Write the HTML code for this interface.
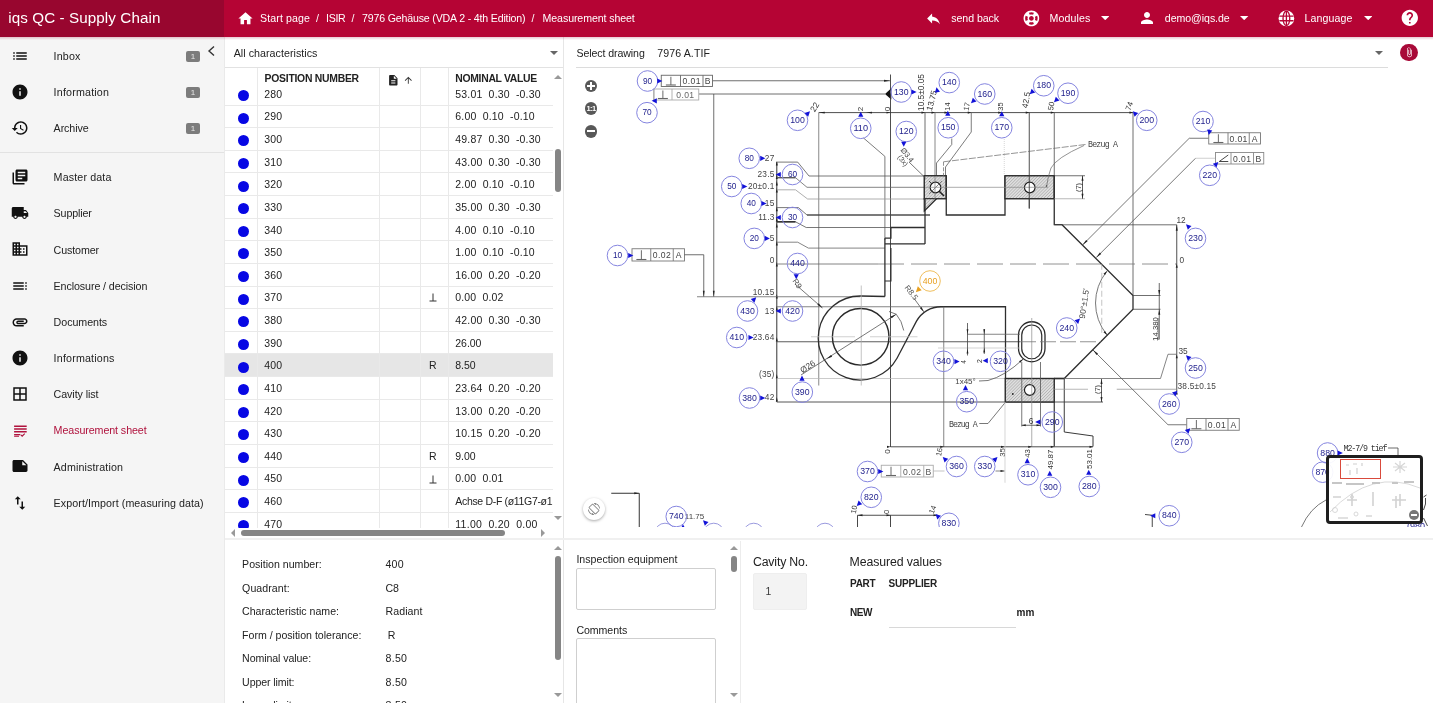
<!DOCTYPE html>
<html><head><meta charset="utf-8"><title>iqs QC</title>
<style>
*{box-sizing:border-box;margin:0;padding:0}
html{background:#fff}
html,body{width:1433px;height:703px;overflow:hidden;background:#fff;font-family:"Liberation Sans",sans-serif;color:#222;}
body{filter:blur(0.4px)}
.abs{position:absolute}
#hdrL{left:0;top:0;width:224px;height:37px;background:#98062f;}
#hdrR{left:224px;top:0;width:1209px;height:37px;background:#b50434;}
#hdrS{left:0;top:37px;width:1433px;height:3px;background:linear-gradient(rgba(152,6,47,.22),rgba(152,6,47,0));z-index:5}
.ht{position:absolute;color:#fff;font-size:10.4px;top:12px;white-space:nowrap;line-height:12px;letter-spacing:-0.1px}
#title{position:absolute;left:8px;top:8px;color:#fff;font-size:15px;line-height:20px;white-space:nowrap;letter-spacing:0.45px}
#side{left:0;top:37px;width:224px;height:666px;background:#f5f5f5;}
#sideB{left:224px;top:37px;width:1px;height:666px;background:#eaeaea}
.si{position:absolute;left:53px;font-size:10.4px;line-height:12px;white-space:nowrap;color:#222;letter-spacing:-0.05px}
.badge{position:absolute;left:186px;width:14px;height:11px;background:#7c7c7c;border-radius:2px;color:#e8e8e8;font-size:8px;line-height:11px;text-align:center}
#mid{left:225px;top:37px;width:339px;height:666px;background:#fff}
#midB{left:563px;top:37px;width:1px;height:666px;background:#e6e6e6}
.tr{position:absolute;left:225px;width:327px;height:22.63px;border-bottom:1px solid #e6e6e6;font-size:10.6px;line-height:12px;color:#222}
.tr i{position:absolute;left:13px;top:6.5px;width:11px;height:11px;border-radius:50%;background:#0606e6}
.tr b{position:absolute;left:39px;top:5px;font-weight:normal}
.tr u{position:absolute;left:204px;top:5px;text-decoration:none}
.tr s{position:absolute;left:230px;top:5px;text-decoration:none;white-space:pre}
.vl{position:absolute;top:68px;width:1px;height:460px;background:#e9e9e9}
.dl{position:absolute;left:241px;font-size:10.4px;line-height:12px;white-space:nowrap;letter-spacing:-0.05px}
.dv{position:absolute;left:385px;font-size:10.4px;line-height:12px;white-space:nowrap}
.lbl{position:absolute;font-size:10.4px;line-height:12px;white-space:nowrap;letter-spacing:-0.05px}
.th{position:absolute;font-size:10.3px;font-weight:bold;line-height:12px;white-space:nowrap;color:#222;letter-spacing:0.1px}
</style></head><body>
<div class="abs" id="hdrL"></div><div class="abs" id="hdrR"></div><div class="abs" id="hdrS"></div>
<div class="abs" style="left:8.3px;top:8.40px;font-size:15.2px;line-height:20px;white-space:pre;color:#fff;letter-spacing:0.092px;">iqs QC - Supply Chain</div>
<svg class="abs" style="left:237px;top:10px" width="17" height="17" viewBox="0 0 24 24"><path fill="#fff" d="M10 20v-6h4v6h5v-8h3L12 3 2 12h3v8z"/></svg>
<div class="abs" style="left:260px;top:12.10px;font-size:10.6px;line-height:12px;white-space:pre;color:#fff;letter-spacing:0.119px;">Start page</div>
<div class="abs" style="left:316px;top:12.10px;font-size:10.6px;line-height:12px;white-space:pre;color:#fff;letter-spacing:0.000px;">/</div>
<div class="abs" style="left:326px;top:12.10px;font-size:10.6px;line-height:12px;white-space:pre;color:#fff;letter-spacing:-0.279px;">ISIR</div>
<div class="abs" style="left:351.5px;top:12.10px;font-size:10.6px;line-height:12px;white-space:pre;color:#fff;letter-spacing:0.000px;">/</div>
<div class="abs" style="left:362px;top:12.10px;font-size:10.6px;line-height:12px;white-space:pre;color:#fff;letter-spacing:-0.165px;">7976 Gehäuse (VDA 2 - 4th Edition)</div>
<div class="abs" style="left:531.5px;top:12.10px;font-size:10.6px;line-height:12px;white-space:pre;color:#fff;letter-spacing:0.000px;">/</div>
<div class="abs" style="left:542.6px;top:12.10px;font-size:10.6px;line-height:12px;white-space:pre;color:#fff;letter-spacing:-0.093px;">Measurement sheet</div>
<svg class="abs" style="left:925px;top:9.5px" width="17" height="17" viewBox="0 0 24 24"><path fill="#fff" d="M10 9V5l-7 7 7 7v-4.1c5 0 8.500 1.600 11 5.100-1-5-4-10-11-11z"/></svg>
<div class="abs" style="left:951.3px;top:11.90px;font-size:10.6px;line-height:12px;white-space:pre;color:#fff;letter-spacing:-0.058px;">send back</div>
<svg class="abs" style="left:1022.2px;top:8.6px" width="18.8" height="18.8" viewBox="0 0 24 24"><path fill="#fff" d="M12 2C6.480 2 2 6.480 2 12s4.480 10 10 10 10-4.480 10-10S17.520 2 12 2zm7.460 7.120l-2.780 1.150c-.51-1.360-1.580-2.440-2.950-2.940l1.150-2.780c2.100.8 3.770 2.470 4.580 4.570zM12 15c-1.660 0-3-1.340-3-3s1.340-3 3-3 3 1.340 3 3-1.340 3-3 3zM9.130 4.540l1.170 2.780c-1.380.5-2.470 1.590-2.980 2.970L4.540 9.130c.81-2.110 2.480-3.780 4.590-4.590zM4.540 14.870l2.780-1.150c.51 1.380 1.590 2.460 2.970 2.960l-1.170 2.780c-2.100-.81-3.770-2.480-4.580-4.590zm10.340 4.590l-1.150-2.780c1.370-.51 2.450-1.590 2.950-2.970l2.780 1.170c-.81 2.100-2.480 3.770-4.580 4.580z" transform="rotate(45 12 12)"/></svg>
<div class="abs" style="left:1049.5px;top:11.90px;font-size:10.6px;line-height:12px;white-space:pre;color:#fff;letter-spacing:0.105px;">Modules</div>
<svg class="abs" style="left:1100.8px;top:16px" width="8.4" height="4.2" viewBox="0 0 10 5"><path fill="#fff" d="M0 0h10L5 5z"/></svg>
<svg class="abs" style="left:1138px;top:9px" width="18" height="18" viewBox="0 0 24 24"><path fill="#fff" d="M12 12c2.210 0 4-1.790 4-4s-1.790-4-4-4-4 1.790-4 4 1.790 4 4 4zm0 2c-2.670 0-8 1.340-8 4v2h16v-2c0-2.660-5.330-4-8-4z"/></svg>
<div class="abs" style="left:1164.8px;top:11.90px;font-size:10.6px;line-height:12px;white-space:pre;color:#fff;letter-spacing:-0.060px;">demo@iqs.de</div>
<svg class="abs" style="left:1240.3px;top:16px" width="8.4" height="4.2" viewBox="0 0 10 5"><path fill="#fff" d="M0 0h10L5 5z"/></svg>
<svg class="abs" style="left:1277px;top:8.5px" width="18.8" height="18.8" viewBox="0 0 24 24"><circle cx="12" cy="12" r="10" fill="#fff"/><g fill="none" stroke="#b50434" stroke-width="1.7"><ellipse cx="12" cy="12" rx="4.3" ry="9.2"/><path d="M3 9h18M3 15h18M12 2.500v19"/></g></svg>
<div class="abs" style="left:1304.6px;top:11.90px;font-size:10.6px;line-height:12px;white-space:pre;color:#fff;letter-spacing:0.080px;">Language</div>
<svg class="abs" style="left:1363.5px;top:16px" width="8.4" height="4.2" viewBox="0 0 10 5"><path fill="#fff" d="M0 0h10L5 5z"/></svg>
<svg class="abs" style="left:1399.7px;top:8.1px" width="19.6" height="19.6" viewBox="0 0 24 24"><path fill="#fff" d="M12 2C6.480 2 2 6.480 2 12s4.480 10 10 10 10-4.480 10-10S17.520 2 12 2zm1 17h-2v-2h2v2zm2.070-7.750l-.9.920C13.450 12.900 13 13.500 13 15h-2v-.5c0-1.100.45-2.100 1.170-2.830l1.240-1.260c.37-.36.590-.86.590-1.410 0-1.100-.9-2-2-2s-2 .9-2 2H8c0-2.210 1.790-4 4-4s4 1.790 4 4c0 .88-.36 1.680-.93 2.250z"/></svg>
<div class="abs" id="side"></div><div class="abs" id="sideB"></div>
<div class="abs" style="left:0;top:152px;width:224px;height:1px;background:#e2e2e2"></div>
<svg class="abs" style="left:11.3px;top:46.8px" width="18" height="18" viewBox="0 0 24 24"><path fill="#111" d="M3 13h2v-2H3v2zm0 4h2v-2H3v2zm0-8h2V7H3v2zm4 4h14v-2H7v2zm0 4h14v-2H7v2zM7 7v2h14V7H7z"/></svg>
<div class="abs" style="left:53.6px;top:50.00px;font-size:10.7px;line-height:12px;white-space:pre;color:#222;letter-spacing:0.165px;">Inbox</div>
<div class="badge" style="top:50.8px">1</div>
<svg class="abs" style="left:11.3px;top:83.0px" width="18" height="18" viewBox="0 0 24 24"><path fill="#111" d="M12 2C6.480 2 2 6.480 2 12s4.480 10 10 10 10-4.480 10-10S17.520 2 12 2zm1 15h-2v-6h2v6zm0-8h-2V7h2v2z"/></svg>
<div class="abs" style="left:53.6px;top:86.20px;font-size:10.7px;line-height:12px;white-space:pre;color:#222;letter-spacing:0.188px;">Information</div>
<div class="badge" style="top:87.0px">1</div>
<svg class="abs" style="left:11.3px;top:119.19999999999999px" width="18" height="18" viewBox="0 0 24 24"><path fill="#111" d="M13 3c-4.970 0-9 4.030-9 9H1l3.890 3.890.07.14L9 12H6c0-3.870 3.130-7 7-7s7 3.130 7 7-3.130 7-7 7c-1.930 0-3.680-.79-4.940-2.060l-1.420 1.420C8.270 19.990 10.510 21 13 21c4.970 0 9-4.030 9-9s-4.030-9-9-9zm-1 5v5l4.280 2.540.72-1.210-3.500-2.080V8H12z"/></svg>
<div class="abs" style="left:53.6px;top:122.40px;font-size:10.7px;line-height:12px;white-space:pre;color:#222;letter-spacing:-0.097px;">Archive</div>
<div class="badge" style="top:123.2px">1</div>
<svg class="abs" style="left:11.3px;top:168.1px" width="18" height="18" viewBox="0 0 24 24"><path fill="#111" d="M4 6H2v14c0 1.100.9 2 2 2h14v-2H4V6zm16-4H8c-1.100 0-2 .9-2 2v12c0 1.100.9 2 2 2h12c1.100 0 2-.9 2-2V4c0-1.100-.9-2-2-2zm-1 9H9V9h10v2zm-4 4H9v-2h6v2zm4-8H9V5h10v2z"/></svg>
<div class="abs" style="left:53.6px;top:171.30px;font-size:10.7px;line-height:12px;white-space:pre;color:#222;letter-spacing:0.136px;">Master data</div>
<svg class="abs" style="left:11.3px;top:204.27px" width="18" height="18" viewBox="0 0 24 24"><path fill="#111" d="M20 8h-3V4H3c-1.100 0-2 .9-2 2v11h2c0 1.660 1.340 3 3 3s3-1.340 3-3h6c0 1.660 1.340 3 3 3s3-1.340 3-3h2v-5l-3-4zM6 18.500c-.83 0-1.500-.67-1.500-1.500s.67-1.500 1.500-1.500 1.500.67 1.500 1.500-.67 1.500-1.500 1.500zm13.500-9l1.960 2.500H17V9.500h2.500zm-1.500 9c-.83 0-1.500-.67-1.500-1.500s.67-1.500 1.500-1.500 1.500.67 1.500 1.500-.67 1.500-1.500 1.500z"/></svg>
<div class="abs" style="left:53.6px;top:207.47px;font-size:10.7px;line-height:12px;white-space:pre;color:#222;letter-spacing:-0.132px;">Supplier</div>
<svg class="abs" style="left:11.3px;top:240.44px" width="18" height="18" viewBox="0 0 24 24"><path fill="#111" d="M12 7V3H2v18h20V7H12zM6 19H4v-2h2v2zm0-4H4v-2h2v2zm0-4H4V9h2v2zm0-4H4V5h2v2zm4 12H8v-2h2v2zm0-4H8v-2h2v2zm0-4H8V9h2v2zm0-4H8V5h2v2zm10 12h-8v-2h2v-2h-2v-2h2v-2h-2V9h8v10zm-2-8h-2v2h2v-2zm0 4h-2v2h2v-2z"/></svg>
<div class="abs" style="left:53.6px;top:243.64px;font-size:10.7px;line-height:12px;white-space:pre;color:#222;letter-spacing:-0.123px;">Customer</div>
<svg class="abs" style="left:11.3px;top:276.61px" width="18" height="18" viewBox="0 0 24 24"><path fill="#111" d="M3 9h14V7H3v2zm0 4h14v-2H3v2zm0 4h14v-2H3v2zm16 0h2v-2h-2v2zm0-10v2h2V7h-2zm0 6h2v-2h-2v2z"/></svg>
<div class="abs" style="left:53.6px;top:279.81px;font-size:10.7px;line-height:12px;white-space:pre;color:#222;letter-spacing:-0.098px;">Enclosure / decision</div>
<svg class="abs" style="left:11.3px;top:312.78px" width="18" height="18" viewBox="0 0 24 24"><path fill="#111" d="M2 12.500C2 9.460 4.460 7 7.500 7H18c2.210 0 4 1.790 4 4s-1.790 4-4 4H9.500C8.120 15 7 13.880 7 12.500S8.120 10 9.500 10H17v2H9.410c-.55 0-.55 1 0 1H18c1.100 0 2-.9 2-2s-.9-2-2-2H7.500C5.570 9 4 10.570 4 12.500S5.570 16 7.500 16H17v2H7.500C4.460 18 2 15.540 2 12.500z"/></svg>
<div class="abs" style="left:53.6px;top:315.98px;font-size:10.7px;line-height:12px;white-space:pre;color:#222;letter-spacing:-0.058px;">Documents</div>
<svg class="abs" style="left:11.3px;top:348.95px" width="18" height="18" viewBox="0 0 24 24"><path fill="#111" d="M12 2C6.480 2 2 6.480 2 12s4.480 10 10 10 10-4.480 10-10S17.520 2 12 2zm1 15h-2v-6h2v6zm0-8h-2V7h2v2z"/></svg>
<div class="abs" style="left:53.6px;top:352.15px;font-size:10.7px;line-height:12px;white-space:pre;color:#222;letter-spacing:0.185px;">Informations</div>
<svg class="abs" style="left:11.3px;top:385.12px" width="18" height="18" viewBox="0 0 24 24"><path fill="#111" d="M3 3v18h18V3H3zm8 16H5v-6h6v6zm0-8H5V5h6v6zm8 8h-6v-6h6v6zm0-8h-6V5h6v6z"/></svg>
<div class="abs" style="left:53.6px;top:388.32px;font-size:10.7px;line-height:12px;white-space:pre;color:#222;letter-spacing:-0.080px;">Cavity list</div>
<svg class="abs" style="left:11.9px;top:421.89000000000004px" width="16.8" height="16.8" viewBox="0 0 24 24"><path fill="#b0123d" d="M3 5h18v2H3zM3 9h18v2H3zM3 13h18v2H3zM3 17h9v2H3zM3 21h7v-1.500H3zM14.500 21.300l-2.300-2.300 1.100-1.100 1.200 1.200 3.200-3.200 1.100 1.100z"/></svg>
<div class="abs" style="left:53.6px;top:424.49px;font-size:10.7px;line-height:12px;white-space:pre;color:#b0123d;letter-spacing:-0.086px;">Measurement sheet</div>
<svg class="abs" style="left:11.3px;top:457.46px" width="18" height="18" viewBox="0 0 24 24"><path fill="#111" d="M22 10l-6-6H4c-1.100 0-2 .9-2 2v12.010c0 1.100.9 1.990 2 1.990l16-.01c1.100 0 2-.89 2-1.990v-8zm-7-4.500l5.500 5.500H15V5.500z"/></svg>
<div class="abs" style="left:53.6px;top:460.66px;font-size:10.7px;line-height:12px;white-space:pre;color:#222;letter-spacing:0.122px;">Administration</div>
<svg class="abs" style="left:11.3px;top:493.63px" width="18" height="18" viewBox="0 0 24 24"><path fill="#111" d="M16 17.010V10h-2v7.010h-3L15 21l4-3.990h-3zM9 3L5 6.990h3V14h2V6.990h3L9 3z"/></svg>
<div class="abs" style="left:53.6px;top:496.83px;font-size:10.7px;line-height:12px;white-space:pre;color:#222;letter-spacing:0.074px;">Export/Import (measuring data)</div>
<svg class="abs" style="left:206px;top:45px" width="10" height="12" viewBox="0 0 10 12"><path d="M8 1.500L3 6l5 4.500" fill="none" stroke="#333" stroke-width="1.400"/></svg>
<div class="abs" id="mid"></div><div class="abs" id="midB"></div>
<div class="abs" style="left:233.7px;top:47.00px;font-size:10.7px;line-height:12px;white-space:pre;color:#222;letter-spacing:0.034px;">All characteristics</div>
<svg class="abs" style="left:550px;top:51px" width="8" height="4" viewBox="0 0 10 5"><path fill="#666" d="M0 0h10L5 5z"/></svg>
<div class="abs" style="left:225px;top:67px;width:338px;height:1px;background:#e2e2e2"></div>
<div class="abs" style="left:225px;top:68px;width:327.5px;height:460px;overflow:hidden">
<div style="position:absolute;left:-225px;top:-68px;width:1433px;height:703px">
<div class="abs" style="left:225px;top:104.53px;width:328px;height:1px;background:#e9e9e9"></div>
<div class="abs" style="left:238.2px;top:90.00px;width:11px;height:11px;border-radius:50%;background:#0707e4"></div>
<div class="abs" style="left:264.3px;top:87.75px;font-size:10.5px;line-height:12px;white-space:pre;color:#222;letter-spacing:0.127px;">280</div>
<div class="abs" style="left:455.3px;top:87.75px;font-size:10.5px;line-height:12px;white-space:pre;color:#222;letter-spacing:0.174px;">53.01  0.30  -0.30</div>
<div class="abs" style="left:225px;top:127.16px;width:328px;height:1px;background:#e9e9e9"></div>
<div class="abs" style="left:238.2px;top:112.63px;width:11px;height:11px;border-radius:50%;background:#0707e4"></div>
<div class="abs" style="left:264.3px;top:110.38px;font-size:10.5px;line-height:12px;white-space:pre;color:#222;letter-spacing:0.127px;">290</div>
<div class="abs" style="left:455.3px;top:110.38px;font-size:10.5px;line-height:12px;white-space:pre;color:#222;letter-spacing:0.179px;">6.00  0.10  -0.10</div>
<div class="abs" style="left:225px;top:149.79px;width:328px;height:1px;background:#e9e9e9"></div>
<div class="abs" style="left:238.2px;top:135.26px;width:11px;height:11px;border-radius:50%;background:#0707e4"></div>
<div class="abs" style="left:264.3px;top:133.01px;font-size:10.5px;line-height:12px;white-space:pre;color:#222;letter-spacing:0.127px;">300</div>
<div class="abs" style="left:455.3px;top:133.01px;font-size:10.5px;line-height:12px;white-space:pre;color:#222;letter-spacing:0.174px;">49.87  0.30  -0.30</div>
<div class="abs" style="left:225px;top:172.42px;width:328px;height:1px;background:#e9e9e9"></div>
<div class="abs" style="left:238.2px;top:157.89px;width:11px;height:11px;border-radius:50%;background:#0707e4"></div>
<div class="abs" style="left:264.3px;top:155.64px;font-size:10.5px;line-height:12px;white-space:pre;color:#222;letter-spacing:0.127px;">310</div>
<div class="abs" style="left:455.3px;top:155.64px;font-size:10.5px;line-height:12px;white-space:pre;color:#222;letter-spacing:0.174px;">43.00  0.30  -0.30</div>
<div class="abs" style="left:225px;top:195.05px;width:328px;height:1px;background:#e9e9e9"></div>
<div class="abs" style="left:238.2px;top:180.52px;width:11px;height:11px;border-radius:50%;background:#0707e4"></div>
<div class="abs" style="left:264.3px;top:178.27px;font-size:10.5px;line-height:12px;white-space:pre;color:#222;letter-spacing:0.127px;">320</div>
<div class="abs" style="left:455.3px;top:178.27px;font-size:10.5px;line-height:12px;white-space:pre;color:#222;letter-spacing:0.179px;">2.00  0.10  -0.10</div>
<div class="abs" style="left:225px;top:217.68px;width:328px;height:1px;background:#e9e9e9"></div>
<div class="abs" style="left:238.2px;top:203.15px;width:11px;height:11px;border-radius:50%;background:#0707e4"></div>
<div class="abs" style="left:264.3px;top:200.90px;font-size:10.5px;line-height:12px;white-space:pre;color:#222;letter-spacing:0.127px;">330</div>
<div class="abs" style="left:455.3px;top:200.90px;font-size:10.5px;line-height:12px;white-space:pre;color:#222;letter-spacing:0.174px;">35.00  0.30  -0.30</div>
<div class="abs" style="left:225px;top:240.31px;width:328px;height:1px;background:#e9e9e9"></div>
<div class="abs" style="left:238.2px;top:225.78px;width:11px;height:11px;border-radius:50%;background:#0707e4"></div>
<div class="abs" style="left:264.3px;top:223.53px;font-size:10.5px;line-height:12px;white-space:pre;color:#222;letter-spacing:0.127px;">340</div>
<div class="abs" style="left:455.3px;top:223.53px;font-size:10.5px;line-height:12px;white-space:pre;color:#222;letter-spacing:0.179px;">4.00  0.10  -0.10</div>
<div class="abs" style="left:225px;top:262.94px;width:328px;height:1px;background:#e9e9e9"></div>
<div class="abs" style="left:238.2px;top:248.41px;width:11px;height:11px;border-radius:50%;background:#0707e4"></div>
<div class="abs" style="left:264.3px;top:246.16px;font-size:10.5px;line-height:12px;white-space:pre;color:#222;letter-spacing:0.127px;">350</div>
<div class="abs" style="left:455.3px;top:246.16px;font-size:10.5px;line-height:12px;white-space:pre;color:#222;letter-spacing:0.179px;">1.00  0.10  -0.10</div>
<div class="abs" style="left:225px;top:285.57px;width:328px;height:1px;background:#e9e9e9"></div>
<div class="abs" style="left:238.2px;top:271.04px;width:11px;height:11px;border-radius:50%;background:#0707e4"></div>
<div class="abs" style="left:264.3px;top:268.79px;font-size:10.5px;line-height:12px;white-space:pre;color:#222;letter-spacing:0.127px;">360</div>
<div class="abs" style="left:455.3px;top:268.79px;font-size:10.5px;line-height:12px;white-space:pre;color:#222;letter-spacing:0.174px;">16.00  0.20  -0.20</div>
<div class="abs" style="left:225px;top:308.20px;width:328px;height:1px;background:#e9e9e9"></div>
<div class="abs" style="left:238.2px;top:293.67px;width:11px;height:11px;border-radius:50%;background:#0707e4"></div>
<div class="abs" style="left:264.3px;top:291.42px;font-size:10.5px;line-height:12px;white-space:pre;color:#222;letter-spacing:0.127px;">370</div>
<svg class="abs" style="left:429px;top:293.47px" width="8" height="9" viewBox="0 0 8 9"><path d="M4 0.500V8M0.500 8H7.500" stroke="#333" stroke-width="1" fill="none"/></svg>
<div class="abs" style="left:455.3px;top:291.42px;font-size:10.5px;line-height:12px;white-space:pre;color:#222;letter-spacing:0.157px;">0.00  0.02</div>
<div class="abs" style="left:225px;top:330.83px;width:328px;height:1px;background:#e9e9e9"></div>
<div class="abs" style="left:238.2px;top:316.30px;width:11px;height:11px;border-radius:50%;background:#0707e4"></div>
<div class="abs" style="left:264.3px;top:314.05px;font-size:10.5px;line-height:12px;white-space:pre;color:#222;letter-spacing:0.127px;">380</div>
<div class="abs" style="left:455.3px;top:314.05px;font-size:10.5px;line-height:12px;white-space:pre;color:#222;letter-spacing:0.174px;">42.00  0.30  -0.30</div>
<div class="abs" style="left:225px;top:353.46px;width:328px;height:1px;background:#e9e9e9"></div>
<div class="abs" style="left:238.2px;top:338.93px;width:11px;height:11px;border-radius:50%;background:#0707e4"></div>
<div class="abs" style="left:264.3px;top:336.68px;font-size:10.5px;line-height:12px;white-space:pre;color:#222;letter-spacing:0.127px;">390</div>
<div class="abs" style="left:455.3px;top:336.68px;font-size:10.5px;line-height:12px;white-space:pre;color:#222;letter-spacing:-0.041px;">26.00</div>
<div class="abs" style="left:225px;top:354.36px;width:328px;height:22.63px;background:#e6e6e6"></div>
<div class="abs" style="left:225px;top:376.09px;width:328px;height:1px;background:#e9e9e9"></div>
<div class="abs" style="left:238.2px;top:361.56px;width:11px;height:11px;border-radius:50%;background:#0707e4"></div>
<div class="abs" style="left:264.3px;top:359.31px;font-size:10.5px;line-height:12px;white-space:pre;color:#222;letter-spacing:0.127px;">400</div>
<div class="abs" style="left:429px;top:359.31px;font-size:10.5px;line-height:12px;white-space:pre;color:#222;letter-spacing:0.000px;">R</div>
<div class="abs" style="left:455.3px;top:359.31px;font-size:10.5px;line-height:12px;white-space:pre;color:#222;letter-spacing:-0.074px;">8.50</div>
<div class="abs" style="left:225px;top:398.72px;width:328px;height:1px;background:#e9e9e9"></div>
<div class="abs" style="left:238.2px;top:384.19px;width:11px;height:11px;border-radius:50%;background:#0707e4"></div>
<div class="abs" style="left:264.3px;top:381.94px;font-size:10.5px;line-height:12px;white-space:pre;color:#222;letter-spacing:0.127px;">410</div>
<div class="abs" style="left:455.3px;top:381.94px;font-size:10.5px;line-height:12px;white-space:pre;color:#222;letter-spacing:0.174px;">23.64  0.20  -0.20</div>
<div class="abs" style="left:225px;top:421.35px;width:328px;height:1px;background:#e9e9e9"></div>
<div class="abs" style="left:238.2px;top:406.82px;width:11px;height:11px;border-radius:50%;background:#0707e4"></div>
<div class="abs" style="left:264.3px;top:404.57px;font-size:10.5px;line-height:12px;white-space:pre;color:#222;letter-spacing:0.127px;">420</div>
<div class="abs" style="left:455.3px;top:404.57px;font-size:10.5px;line-height:12px;white-space:pre;color:#222;letter-spacing:0.174px;">13.00  0.20  -0.20</div>
<div class="abs" style="left:225px;top:443.98px;width:328px;height:1px;background:#e9e9e9"></div>
<div class="abs" style="left:238.2px;top:429.45px;width:11px;height:11px;border-radius:50%;background:#0707e4"></div>
<div class="abs" style="left:264.3px;top:427.20px;font-size:10.5px;line-height:12px;white-space:pre;color:#222;letter-spacing:0.127px;">430</div>
<div class="abs" style="left:455.3px;top:427.20px;font-size:10.5px;line-height:12px;white-space:pre;color:#222;letter-spacing:0.174px;">10.15  0.20  -0.20</div>
<div class="abs" style="left:225px;top:466.61px;width:328px;height:1px;background:#e9e9e9"></div>
<div class="abs" style="left:238.2px;top:452.08px;width:11px;height:11px;border-radius:50%;background:#0707e4"></div>
<div class="abs" style="left:264.3px;top:449.83px;font-size:10.5px;line-height:12px;white-space:pre;color:#222;letter-spacing:0.127px;">440</div>
<div class="abs" style="left:429px;top:449.83px;font-size:10.5px;line-height:12px;white-space:pre;color:#222;letter-spacing:0.000px;">R</div>
<div class="abs" style="left:455.3px;top:449.83px;font-size:10.5px;line-height:12px;white-space:pre;color:#222;letter-spacing:-0.074px;">9.00</div>
<div class="abs" style="left:225px;top:489.24px;width:328px;height:1px;background:#e9e9e9"></div>
<div class="abs" style="left:238.2px;top:474.71px;width:11px;height:11px;border-radius:50%;background:#0707e4"></div>
<div class="abs" style="left:264.3px;top:472.46px;font-size:10.5px;line-height:12px;white-space:pre;color:#222;letter-spacing:0.127px;">450</div>
<svg class="abs" style="left:429px;top:474.51px" width="8" height="9" viewBox="0 0 8 9"><path d="M4 0.500V8M0.500 8H7.500" stroke="#333" stroke-width="1" fill="none"/></svg>
<div class="abs" style="left:455.3px;top:472.46px;font-size:10.5px;line-height:12px;white-space:pre;color:#222;letter-spacing:0.157px;">0.00  0.01</div>
<div class="abs" style="left:225px;top:511.87px;width:328px;height:1px;background:#e9e9e9"></div>
<div class="abs" style="left:238.2px;top:497.34px;width:11px;height:11px;border-radius:50%;background:#0707e4"></div>
<div class="abs" style="left:264.3px;top:495.09px;font-size:10.5px;line-height:12px;white-space:pre;color:#222;letter-spacing:0.127px;">460</div>
<div class="abs" style="left:455.3px;top:495.09px;font-size:10.5px;line-height:12px;white-space:pre;color:#222;letter-spacing:-0.325px;">Achse D-F (ø11G7-ø1</div>
<div class="abs" style="left:225px;top:534.50px;width:328px;height:1px;background:#e9e9e9"></div>
<div class="abs" style="left:238.2px;top:519.97px;width:11px;height:11px;border-radius:50%;background:#0707e4"></div>
<div class="abs" style="left:264.3px;top:517.72px;font-size:10.5px;line-height:12px;white-space:pre;color:#222;letter-spacing:0.127px;">470</div>
<div class="abs" style="left:455.3px;top:517.72px;font-size:10.5px;line-height:12px;white-space:pre;color:#222;letter-spacing:0.254px;">11.00  0.20  0.00</div>
<div class="abs" style="left:225px;top:68px;width:328px;height:17.5px;background:#fff"></div>
<div class="abs" style="left:264.6px;top:72.60px;font-size:10.4px;line-height:12px;white-space:pre;font-weight:bold;color:#222;letter-spacing:-0.262px;">POSITION NUMBER</div>
<div class="abs" style="left:455.3px;top:72.60px;font-size:10.4px;line-height:12px;white-space:pre;font-weight:bold;color:#222;letter-spacing:-0.308px;">NOMINAL VALUE</div>
<svg class="abs" style="left:386.6px;top:73.8px" width="12.6" height="12.6" viewBox="0 0 24 24"><path fill="#222" d="M14 2H6c-1.100 0-1.990.9-1.990 2L4 20c0 1.100.89 2 1.990 2H18c1.100 0 2-.9 2-2V8l-6-6zm2 16H8v-2h8v2zm0-4H8v-2h8v2zm-3-5V3.500L18.500 9H13z"/></svg>
<svg class="abs" style="left:403.2px;top:74.6px" width="10.6" height="10.6" viewBox="0 0 24 24"><path fill="#333" d="M4 12l1.410 1.410L11 7.830V20h2V7.830l5.580 5.590L20 12l-8-8-8 8z"/></svg>
<div class="abs" style="left:256.8px;top:68px;width:1px;height:460px;background:#e9e9e9"></div>
<div class="abs" style="left:378.9px;top:68px;width:1px;height:460px;background:#e9e9e9"></div>
<div class="abs" style="left:419.7px;top:68px;width:1px;height:460px;background:#e9e9e9"></div>
<div class="abs" style="left:447.7px;top:68px;width:1px;height:460px;background:#e9e9e9"></div>
</div></div>
<svg class="abs" style="left:553.7px;top:75px" width="8" height="4" viewBox="0 0 10 5"><path fill="#999" d="M0 5h10L5 0z"/></svg>
<svg class="abs" style="left:553.7px;top:516px" width="8" height="4" viewBox="0 0 10 5"><path fill="#999" d="M0 0h10L5 5z"/></svg>
<div class="abs" style="left:554.7px;top:148.7px;width:6px;height:43.8px;border-radius:3px;background:#858585"></div>
<div class="abs" style="left:241px;top:530px;width:264px;height:6px;border-radius:3px;background:#858585"></div>
<svg class="abs" style="left:231px;top:529px" width="4" height="8" viewBox="0 0 5 10"><path fill="#999" d="M5 0v10L0 5z"/></svg>
<svg class="abs" style="left:541px;top:529px" width="4" height="8" viewBox="0 0 5 10"><path fill="#999" d="M0 0v10L5 5z"/></svg>
<div class="abs" style="left:225px;top:538.3px;width:1208px;height:2px;background:#f0f0f0"></div>
<div class="abs" style="left:242.1px;top:558.30px;font-size:10.6px;line-height:12px;white-space:pre;color:#222;letter-spacing:0.004px;">Position number:</div>
<div class="abs" style="left:385.6px;top:558.30px;font-size:10.6px;line-height:12px;white-space:pre;color:#222;letter-spacing:0.138px;">400</div>
<div class="abs" style="left:242.1px;top:581.80px;font-size:10.6px;line-height:12px;white-space:pre;color:#222;letter-spacing:0.051px;">Quadrant:</div>
<div class="abs" style="left:385.6px;top:581.80px;font-size:10.6px;line-height:12px;white-space:pre;color:#222;letter-spacing:-0.175px;">C8</div>
<div class="abs" style="left:242.1px;top:605.30px;font-size:10.6px;line-height:12px;white-space:pre;color:#222;letter-spacing:-0.015px;">Characteristic name:</div>
<div class="abs" style="left:385.6px;top:605.30px;font-size:10.6px;line-height:12px;white-space:pre;color:#222;letter-spacing:0.038px;">Radiant</div>
<div class="abs" style="left:242.1px;top:628.80px;font-size:10.6px;line-height:12px;white-space:pre;color:#222;letter-spacing:-0.012px;">Form / position tolerance:</div>
<div class="abs" style="left:387.7px;top:628.80px;font-size:10.6px;line-height:12px;white-space:pre;color:#222;letter-spacing:0.000px;">R</div>
<div class="abs" style="left:242.1px;top:652.30px;font-size:10.6px;line-height:12px;white-space:pre;color:#222;letter-spacing:-0.080px;">Nominal value:</div>
<div class="abs" style="left:385.6px;top:652.30px;font-size:10.6px;line-height:12px;white-space:pre;color:#222;letter-spacing:0.267px;">8.50</div>
<div class="abs" style="left:242.1px;top:675.80px;font-size:10.6px;line-height:12px;white-space:pre;color:#222;letter-spacing:-0.100px;">Upper limit:</div>
<div class="abs" style="left:385.6px;top:675.80px;font-size:10.6px;line-height:12px;white-space:pre;color:#222;letter-spacing:0.267px;">8.50</div>
<div class="abs" style="left:242.1px;top:699.30px;font-size:10.6px;line-height:12px;white-space:pre;color:#222;letter-spacing:-0.100px;">Lower limit:</div>
<div class="abs" style="left:385.6px;top:699.30px;font-size:10.6px;line-height:12px;white-space:pre;color:#222;letter-spacing:0.267px;">8.50</div>
<div class="abs" style="left:554.8px;top:556.2px;width:6px;height:103.5px;border-radius:3px;background:#858585"></div>
<svg class="abs" style="left:553.7px;top:546px" width="8" height="4" viewBox="0 0 10 5"><path fill="#999" d="M0 5h10L5 0z"/></svg>
<svg class="abs" style="left:553.7px;top:693px" width="8" height="4" viewBox="0 0 10 5"><path fill="#999" d="M0 0h10L5 5z"/></svg>
<div class="abs" style="left:576.4px;top:47.00px;font-size:10.6px;line-height:12px;white-space:pre;color:#222;letter-spacing:-0.081px;">Select drawing</div>
<div class="abs" style="left:657.3px;top:47.00px;font-size:10.6px;line-height:12px;white-space:pre;color:#222;letter-spacing:0.095px;">7976 A.TIF</div>
<svg class="abs" style="left:1375.4px;top:51px" width="8" height="4" viewBox="0 0 10 5"><path fill="#666" d="M0 0h10L5 5z"/></svg>
<div class="abs" style="left:576px;top:67px;width:811.5px;height:1px;background:#dcdcdc"></div>
<div class="abs" style="left:1400.2px;top:43.8px;width:17.6px;height:17.6px;border-radius:50%;background:#a80a38"></div>
<svg class="abs" style="left:1403.7px;top:47.3px" width="10.6" height="10.6" viewBox="0 0 24 24"><path fill="#fff" d="M16.500 6v11.500c0 2.210-1.790 4-4 4s-4-1.790-4-4V5c0-1.380 1.120-2.500 2.500-2.500s2.500 1.120 2.500 2.500v10.500c0 .55-.45 1-1 1s-1-.45-1-1V6H10v9.500c0 1.380 1.120 2.500 2.500 2.500s2.500-1.120 2.500-2.500V5c0-2.210-1.790-4-4-4S7 2.790 7 5v12.500c0 3.040 2.460 5.500 5.500 5.500s5.500-2.460 5.500-5.500V6h-1.500z"/></svg>
<svg class="abs" style="left:564px;top:68px" width="869" height="458.5" viewBox="564 68 869 458.5" font-family="Liberation Sans, sans-serif">
<defs><pattern id="hat" width="2.2" height="2.2" patternUnits="userSpaceOnUse" patternTransform="rotate(-45)"><rect width="2.2" height="2.2" fill="#dedede"/><line x1="0" y1="0" x2="2.2" y2="0" stroke="#9a9a9a" stroke-width="0.9"/></pattern></defs>
<line x1="712.5" y1="80.75" x2="890" y2="80.75" stroke="#4a4a4a" stroke-width="0.8" />
<polygon points="890.00,80.75 884.00,81.65 884.00,79.85" fill="#222"/>
<line x1="698.75" y1="94" x2="885" y2="94" stroke="#4a4a4a" stroke-width="0.8" />
<polygon points="885,94 891.3,88.2 891.3,99.6" fill="#111"/>
<line x1="713.75" y1="94" x2="713.75" y2="296.75" stroke="#4a4a4a" stroke-width="0.8" />
<polygon points="713.75,296.75 712.85,290.75 714.65,290.75" fill="#222"/>
<rect x="661.25" y="75.25" width="51.25" height="11.25" fill="#fff" stroke="#666" stroke-width="0.9"/>
<line x1="680.5" y1="75.25" x2="680.5" y2="86.5" stroke="#666" stroke-width="0.9" />
<line x1="703" y1="75.25" x2="703" y2="86.5" stroke="#666" stroke-width="0.9" />
<line x1="670.875" y1="76.75" x2="670.875" y2="85.0" stroke="#444" stroke-width="0.8" />
<line x1="665.875" y1="85.0" x2="675.875" y2="85.0" stroke="#666" stroke-width="1.1" />
<text x="691.75" y="81.175" dy="3.10" font-size="8.6" text-anchor="middle" fill="#444" letter-spacing="0.4">0.01</text>
<text x="707.75" y="81.175" dy="3.10" font-size="8.6" text-anchor="middle" fill="#444" letter-spacing="0.4">B</text>
<rect x="653.75" y="89" width="45.0" height="11" fill="#fff" stroke="#aaa" stroke-width="0.9"/>
<line x1="672" y1="89" x2="672" y2="100" stroke="#aaa" stroke-width="0.9" />
<line x1="662.875" y1="90.5" x2="662.875" y2="98.5" stroke="#444" stroke-width="0.8" />
<line x1="657.875" y1="98.5" x2="667.875" y2="98.5" stroke="#666" stroke-width="1.1" />
<text x="685.375" y="94.8" dy="3.10" font-size="8.6" text-anchor="middle" fill="#666" letter-spacing="0.4">0.01</text>
<polyline points="654,100.5 654,89" fill="none" stroke="#9a9a9a" stroke-width="0.8" stroke-linejoin="miter" />
<rect x="632" y="248.75" width="52.5" height="12.25" fill="#fff" stroke="#777" stroke-width="0.9"/>
<line x1="650.75" y1="248.75" x2="650.75" y2="261" stroke="#777" stroke-width="0.9" />
<line x1="673.25" y1="248.75" x2="673.25" y2="261" stroke="#777" stroke-width="0.9" />
<line x1="641.375" y1="250.25" x2="641.375" y2="259.5" stroke="#444" stroke-width="0.8" />
<line x1="636.375" y1="259.5" x2="646.375" y2="259.5" stroke="#666" stroke-width="1.1" />
<text x="662.0" y="255.175" dy="3.10" font-size="8.6" text-anchor="middle" fill="#444" letter-spacing="0.4">0.02</text>
<text x="678.875" y="255.175" dy="3.10" font-size="8.6" text-anchor="middle" fill="#444" letter-spacing="0.4">A</text>
<polyline points="684.5,254.75 703.75,254.75 703.75,296.75" fill="none" stroke="#4a4a4a" stroke-width="0.8" stroke-linejoin="miter" />
<polygon points="703.75,296.75 702.85,290.75 704.65,290.75" fill="#222"/>
<line x1="890.5" y1="74.5" x2="890.5" y2="447" stroke="#3a3a3a" stroke-width="0.9" />
<line x1="818.75" y1="112.6" x2="818.75" y2="385.5" stroke="#6a6a6a" stroke-width="0.8" />
<line x1="818.75" y1="112.6" x2="1133" y2="112.6" stroke="#3a3a3a" stroke-width="0.9" />
<polygon points="818.75,112.60 824.75,111.70 824.75,113.50" fill="#222"/>
<polygon points="866.00,112.60 872.00,111.70 872.00,113.50" fill="#222"/>
<polygon points="890.50,112.60 886.50,113.50 886.50,111.70" fill="#222"/>
<polygon points="925.00,112.60 921.50,113.70 921.50,111.50" fill="#222"/>
<polygon points="935.00,112.60 931.50,113.70 931.50,111.50" fill="#222"/>
<polygon points="948.00,112.60 944.50,113.70 944.50,111.50" fill="#222"/>
<polygon points="971.25,112.60 967.75,113.70 967.75,111.50" fill="#222"/>
<polygon points="1001.75,112.60 998.25,113.70 998.25,111.50" fill="#222"/>
<polygon points="1029.25,112.60 1025.75,113.70 1025.75,111.50" fill="#222"/>
<polygon points="1054.25,112.60 1050.75,113.70 1050.75,111.50" fill="#222"/>
<polygon points="1133.00,112.60 1129.50,113.70 1129.50,111.50" fill="#222"/>
<polyline points="863.5,138 884.9,156.4 884.9,240" fill="none" stroke="#5a5a5a" stroke-width="0.8" stroke-linejoin="miter" />
<line x1="925" y1="112.6" x2="925" y2="176" stroke="#4a4a4a" stroke-width="0.8" />
<line x1="935" y1="112.6" x2="935" y2="182" stroke="#6a6a6a" stroke-width="0.8" />
<polyline points="951.75,138.5 951.75,144.5 936.5,163 936.5,176" fill="none" stroke="#5a5a5a" stroke-width="0.8" stroke-linejoin="miter" />
<polyline points="971.25,112.6 971.25,132 945.5,167 945.5,176" fill="none" stroke="#5a5a5a" stroke-width="0.8" stroke-linejoin="miter" />
<line x1="1004.25" y1="137" x2="1004.25" y2="175.75" stroke="#c4c4c4" stroke-width="0.7" stroke-dasharray="1 1"/>
<line x1="1029.25" y1="112.6" x2="1029.25" y2="208.5" stroke="#3a3a3a" stroke-width="0.9" />
<line x1="1054.25" y1="112.6" x2="1054.25" y2="175.75" stroke="#4a4a4a" stroke-width="0.8" />
<line x1="1133" y1="112.6" x2="1133" y2="295.5" stroke="#4a4a4a" stroke-width="0.8" />
<text x="814.5" y="107" dy="3.06" font-size="8.5" text-anchor="middle" fill="#333" transform="rotate(-60 814.5 107)" >22</text>
<text x="860.5" y="109" dy="2.88" font-size="8" text-anchor="middle" fill="#333" transform="rotate(-90 860.5 109)" >2</text>
<text x="886.75" y="109" dy="2.88" font-size="8" text-anchor="middle" fill="#333" transform="rotate(-90 886.75 109)" >0</text>
<text x="921" y="92.5" dy="2.99" font-size="8.3" text-anchor="middle" fill="#333" transform="rotate(-90 921 92.5)" >10.5±0.05</text>
<text x="931.5" y="100.5" dy="2.99" font-size="8.3" text-anchor="middle" fill="#333" transform="rotate(-75 931.5 100.5)" >13.75</text>
<text x="947.5" y="106.5" dy="2.70" font-size="7.5" text-anchor="middle" fill="#333" transform="rotate(-90 947.5 106.5)" >14</text>
<text x="966.5" y="106.5" dy="2.70" font-size="7.5" text-anchor="middle" fill="#333" transform="rotate(-80 966.5 106.5)" >17</text>
<text x="1000" y="106.5" dy="2.70" font-size="7.5" text-anchor="middle" fill="#333" transform="rotate(-90 1000 106.5)" >35</text>
<text x="1026" y="100" dy="2.99" font-size="8.3" text-anchor="middle" fill="#333" transform="rotate(-80 1026 100)" >42.5</text>
<text x="1051" y="106" dy="2.81" font-size="7.8" text-anchor="middle" fill="#333" transform="rotate(-80 1051 106)" >50</text>
<text x="1129" y="106" dy="2.81" font-size="7.8" text-anchor="middle" fill="#333" transform="rotate(-70 1129 106)" >74</text>
<line x1="776.8" y1="162" x2="776.8" y2="402" stroke="#333" stroke-width="1" />
<polygon points="776.80,161.00 777.80,165.50 775.80,165.50" fill="#222"/>
<polygon points="776.80,174.50 777.80,179.00 775.80,179.00" fill="#222"/>
<polygon points="776.80,181.00 777.80,185.50 775.80,185.50" fill="#222"/>
<polygon points="776.80,188.00 777.80,192.50 775.80,192.50" fill="#222"/>
<polygon points="776.80,206.70 777.80,211.20 775.80,211.20" fill="#222"/>
<polygon points="776.80,217.00 777.80,221.50 775.80,221.50" fill="#222"/>
<polygon points="776.80,223.00 777.80,227.50 775.80,227.50" fill="#222"/>
<polygon points="776.80,241.00 777.80,245.50 775.80,245.50" fill="#222"/>
<polygon points="776.80,262.00 777.80,266.50 775.80,266.50" fill="#222"/>
<polygon points="776.80,294.00 777.80,298.50 775.80,298.50" fill="#222"/>
<polygon points="776.80,306.00 777.80,310.50 775.80,310.50" fill="#222"/>
<polygon points="776.80,337.00 777.80,341.50 775.80,341.50" fill="#222"/>
<polygon points="776.80,374.00 777.80,378.50 775.80,378.50" fill="#222"/>
<polygon points="776.80,397.00 777.80,401.50 775.80,401.50" fill="#222"/>
<polyline points="776.8,162.1 797.7,162.1 809,176 925,176" fill="none" stroke="#555" stroke-width="0.8" stroke-linejoin="miter" />
<polyline points="776.8,177.7 795.5,177.7 807,187.3 925,187.3" fill="none" stroke="#666" stroke-width="0.8" stroke-linejoin="miter" />
<polyline points="776.8,189.8 795.5,189.8 807.6,199 925,199" fill="none" stroke="#999" stroke-width="0.8" stroke-linejoin="miter" />
<polyline points="776.8,207.6 798.4,207.6 807,215 930,215" fill="none" stroke="#555" stroke-width="0.8" stroke-linejoin="miter" />
<polyline points="776.8,221.8 795.5,221.8 806.2,227.5 925,227.5" fill="none" stroke="#555" stroke-width="0.8" stroke-linejoin="miter" />
<polyline points="776.8,242.2 797.7,242.2 808.4,248.1 884.9,248.1" fill="none" stroke="#666" stroke-width="0.8" stroke-linejoin="miter" />
<line x1="807" y1="215" x2="930" y2="215" stroke="#3a3a3a" stroke-width="1.2" />
<line x1="776.8" y1="221.8" x2="795.5" y2="221.8" stroke="#333" stroke-width="1.6" />
<line x1="776.8" y1="177.7" x2="795.5" y2="177.7" stroke="#555" stroke-width="1.2" />
<text x="774.5" y="158.2" dy="2.99" font-size="8.3" text-anchor="end" fill="#444" letter-spacing="0.2">27</text>
<text x="774.5" y="174.5" dy="2.99" font-size="8.3" text-anchor="end" fill="#444" letter-spacing="0.2">23.5</text>
<text x="774.5" y="186.5" dy="2.99" font-size="8.3" text-anchor="end" fill="#444" letter-spacing="0.2">20±0.1</text>
<text x="774.5" y="203.5" dy="2.99" font-size="8.3" text-anchor="end" fill="#444" letter-spacing="0.2">15</text>
<text x="774.5" y="217.5" dy="2.99" font-size="8.3" text-anchor="end" fill="#444" letter-spacing="0.2">11.3</text>
<text x="774.5" y="238.2" dy="2.99" font-size="8.3" text-anchor="end" fill="#444" letter-spacing="0.2">5</text>
<text x="774.5" y="260.5" dy="2.99" font-size="8.3" text-anchor="end" fill="#444" letter-spacing="0.2">0</text>
<text x="774.5" y="292.5" dy="2.99" font-size="8.3" text-anchor="end" fill="#444" letter-spacing="0.2">10.15</text>
<text x="774.5" y="311" dy="2.99" font-size="8.3" text-anchor="end" fill="#444" letter-spacing="0.2">13</text>
<text x="774.5" y="337.5" dy="2.99" font-size="8.3" text-anchor="end" fill="#444" letter-spacing="0.2">23.64</text>
<text x="774.5" y="374.5" dy="2.99" font-size="8.3" text-anchor="end" fill="#444" letter-spacing="0.2">(35)</text>
<text x="774.5" y="397.5" dy="2.99" font-size="8.3" text-anchor="end" fill="#444" letter-spacing="0.2">42</text>
<line x1="776.8" y1="264" x2="878" y2="264" stroke="#666" stroke-width="0.8" />
<line x1="878" y1="264" x2="1176.75" y2="264" stroke="#777" stroke-width="0.8" stroke-dasharray="26 7"/>
<line x1="697" y1="296.75" x2="860" y2="296.75" stroke="#666" stroke-width="0.8" />
<line x1="776.8" y1="306.75" x2="943" y2="306.75" stroke="#666" stroke-width="0.8" />
<line x1="776.8" y1="341.75" x2="1020" y2="341.75" stroke="#4a4a4a" stroke-width="0.9" />
<line x1="776.8" y1="378.5" x2="1005" y2="378.5" stroke="#b5b5b5" stroke-width="0.7" />
<line x1="776.8" y1="402" x2="1103" y2="402" stroke="#444" stroke-width="0.9" />
<rect x="924.25" y="175.75" width="22" height="23" fill="url(#hat)" stroke="#2a2a2a" stroke-width="1.4"/>
<polygon points="924.25,198.75 936.5,198.75 924.25,211" fill="url(#hat)" stroke="#2a2a2a" stroke-width="1.2"/>
<circle cx="935.5" cy="187.5" r="5.3" fill="#fff" stroke="#222" stroke-width="1.2"/>
<line x1="929" y1="181" x2="932" y2="184" stroke="#333" stroke-width="0.9" />
<line x1="939" y1="191" x2="944" y2="196" stroke="#222" stroke-width="1.6" />
<line x1="929" y1="194" x2="942" y2="181" stroke="#555" stroke-width="0.7" />
<polyline points="946.25,175.75 946.25,215 1005,215 1005,175.75" fill="none" stroke="#2e2e2e" stroke-width="1.3" stroke-linejoin="miter" />
<rect x="1005" y="175.75" width="49.25" height="23" fill="url(#hat)" stroke="#2a2a2a" stroke-width="1.4"/>
<circle cx="1029.75" cy="187.5" r="5.3" fill="#fff" stroke="#222" stroke-width="1.2"/>
<line x1="925" y1="187.3" x2="1048" y2="187.3" stroke="#8a8a8a" stroke-width="0.7" />
<line x1="1029.25" y1="175" x2="1029.25" y2="208.5" stroke="#3a3a3a" stroke-width="0.9" />
<line x1="935" y1="176" x2="935" y2="199" stroke="#777" stroke-width="0.7" />
<polyline points="1054.25,175.75 1054.25,224.7 1062,224.7 1133,295.5 1133,309.25 1064.25,378.5 1054.25,378.5" fill="none" stroke="#2e2e2e" stroke-width="1.3" stroke-linejoin="miter" />
<line x1="1054.25" y1="224.8" x2="1176.75" y2="224.8" stroke="#4a4a4a" stroke-width="0.8" />
<line x1="925" y1="199" x2="925" y2="244" stroke="#2e2e2e" stroke-width="1.3" />
<polyline points="925,227.5 890.9,227.5 890.9,238.2 884.9,238.2" fill="none" stroke="#2e2e2e" stroke-width="1.3" stroke-linejoin="miter" />
<line x1="884.9" y1="243.8" x2="925" y2="243.8" stroke="#2e2e2e" stroke-width="1.3" />
<line x1="884.9" y1="238.2" x2="884.9" y2="296.5" stroke="#2e2e2e" stroke-width="1.3" />
<polyline points="890.9,248 890.9,281 884.9,281" fill="none" stroke="#2e2e2e" stroke-width="1.2" stroke-linejoin="miter" />
<path d="M884.9 296.5 L860.5 296 A42 42 0 1 0 897 358.3 L916.500 321.150 A28 28 0 0 1 941 306.750 L1005.500 306.750 L1005.500 378.500" fill="none" stroke="#2e2e2e" stroke-width="1.3" />
<circle cx="860.7" cy="336.8" r="28.3" fill="none" stroke="#2a2a2a" stroke-width="1.4"/>
<line x1="861.25" y1="285.5" x2="861.25" y2="385.5" stroke="#aaa" stroke-width="0.7" />
<line x1="811" y1="336.75" x2="855" y2="336.75" stroke="#bbb" stroke-width="0.7" />
<line x1="870" y1="336.75" x2="917.5" y2="336.75" stroke="#bbb" stroke-width="0.7" />
<line x1="801" y1="375" x2="896.25" y2="314.25" stroke="#555" stroke-width="0.8" />
<polygon points="826.50,359.00 831.06,354.97 832.12,356.67" fill="#222"/>
<polygon points="896.25,314.25 891.69,318.28 890.63,316.58" fill="#222"/>
<path d="M889 311.500 L896.250 314.250 Q902 321 903.750 330.500" fill="none" stroke="#555" stroke-width="0.8" />
<text x="807.5" y="366.5" dy="3.06" font-size="8.5" text-anchor="middle" fill="#444" transform="rotate(-33 807.5 366.5)" >Ø26</text>
<text x="907.5" y="155" dy="2.70" font-size="7.5" text-anchor="middle" fill="#444" transform="rotate(52 907.5 155)" >Ø3.4</text>
<text x="903" y="160.5" dy="2.52" font-size="7" text-anchor="middle" fill="#444" transform="rotate(52 903 160.5)" >(3x)</text>
<line x1="909" y1="162" x2="926" y2="178.5" stroke="#555" stroke-width="0.8" />
<line x1="795" y1="284" x2="822.5" y2="308" stroke="#555" stroke-width="0.8" />
<polygon points="822.50,308.00 817.32,304.82 818.63,303.31" fill="#222"/>
<text x="797.5" y="283.5" dy="2.81" font-size="7.8" text-anchor="middle" fill="#444" transform="rotate(55 797.5 283.5)" >R9</text>
<line x1="913.75" y1="298" x2="923.75" y2="311.75" stroke="#555" stroke-width="0.8" />
<polygon points="923.75,311.75 920.00,308.29 921.62,307.12" fill="#222"/>
<text x="911.5" y="292.5" dy="2.81" font-size="7.8" text-anchor="middle" fill="#555" transform="rotate(52 911.5 292.5)" >R8.5</text>
<line x1="943.75" y1="306.75" x2="943.75" y2="447" stroke="#666" stroke-width="0.8" />
<rect x="1005.25" y="378.5" width="49" height="23.5" fill="url(#hat)" stroke="#2a2a2a" stroke-width="1.4"/>
<circle cx="1029.75" cy="390" r="5.3" fill="#fff" stroke="#222" stroke-width="1.2"/>
<circle cx="1012.8" cy="394" r="0.9" fill="#222"/>
<line x1="1021.75" y1="362" x2="1021.75" y2="426.5" stroke="#555" stroke-width="0.8" />
<line x1="1040.5" y1="362" x2="1040.5" y2="426.5" stroke="#555" stroke-width="0.8" />
<line x1="1054.25" y1="378.5" x2="1064.25" y2="378.5" stroke="#2e2e2e" stroke-width="1.2" />
<polyline points="1064.25,378.5 1064.25,432 1093,436 1093,446.5" fill="none" stroke="#3a3a3a" stroke-width="1" stroke-linejoin="miter" />
<line x1="1054.25" y1="402" x2="1054.25" y2="446.5" stroke="#333" stroke-width="1.2" />
<rect x="1018.5" y="321.75" width="26.5" height="40" rx="13.25" fill="none" stroke="#2a2a2a" stroke-width="1.3"/>
<rect x="1021.75" y="325" width="20" height="33.75" rx="10" fill="none" stroke="#2a2a2a" stroke-width="1.2"/>
<line x1="1031.75" y1="318" x2="1031.75" y2="446.5" stroke="#8a8a8a" stroke-width="0.7" />
<line x1="1020" y1="341.75" x2="1101" y2="341.75" stroke="#777" stroke-width="0.8" stroke-dasharray="16 4"/>
<line x1="967" y1="334.25" x2="1020" y2="334.25" stroke="#666" stroke-width="0.8" />
<line x1="938" y1="348" x2="1020" y2="348" stroke="#c0c0c0" stroke-width="0.7" />
<line x1="967.5" y1="323" x2="967.5" y2="355.5" stroke="#444" stroke-width="0.8" />
<polygon points="967.50,334.25 966.60,329.25 968.40,329.25" fill="#222"/>
<polygon points="967.50,348.50 968.40,353.50 966.60,353.50" fill="#222"/>
<line x1="984.25" y1="329" x2="984.25" y2="354" stroke="#444" stroke-width="0.8" />
<polygon points="984.25,334.25 983.35,329.25 985.15,329.25" fill="#222"/>
<polygon points="984.25,347.50 985.15,352.50 983.35,352.50" fill="#222"/>
<text x="963.5" y="362" dy="2.34" font-size="6.5" text-anchor="middle" fill="#333" transform="rotate(-90 963.5 362)" >4</text>
<text x="979.5" y="361" dy="2.52" font-size="7" text-anchor="middle" fill="#333" transform="rotate(-90 979.5 361)" >2</text>
<text x="965.5" y="381" dy="2.88" font-size="8" text-anchor="middle" fill="#444" >1x45°</text>
<path d="M979 381 L988 380.500 Q1005 376 1023 359.250" fill="none" stroke="#555" stroke-width="0.8" />
<polygon points="1023.50,358.80 1020.31,362.78 1019.03,361.25" fill="#222"/>
<text x="963.5" y="424" dy="2.99" font-size="8.3" text-anchor="middle" fill="#444" letter-spacing="0.3" font-family="Liberation Mono" textLength="29">Bezug A</text>
<polyline points="979.25,423.5 988,423.5 1005,402.75" fill="none" stroke="#555" stroke-width="0.8" stroke-linejoin="miter" />
<line x1="1021.75" y1="425.25" x2="1040.5" y2="425.25" stroke="#444" stroke-width="0.8" />
<text x="1031" y="421.5" dy="2.99" font-size="8.3" text-anchor="middle" fill="#333" >6</text>
<polygon points="1021.75,425.25 1025.75,424.35 1025.75,426.15" fill="#222"/>
<polygon points="1040.50,425.25 1036.50,426.15 1036.50,424.35" fill="#222"/>
<line x1="890.5" y1="446.8" x2="1093" y2="446.8" stroke="#3a3a3a" stroke-width="0.9" />
<polygon points="890.50,446.80 887.00,447.90 887.00,445.70" fill="#222"/>
<polygon points="943.75,446.80 940.25,447.90 940.25,445.70" fill="#222"/>
<polygon points="1004.50,446.80 1001.00,447.90 1001.00,445.70" fill="#222"/>
<polygon points="1031.75,446.80 1028.25,447.90 1028.25,445.70" fill="#222"/>
<polygon points="1054.25,446.80 1050.75,447.90 1050.75,445.70" fill="#222"/>
<polygon points="1093.00,446.80 1089.50,447.90 1089.50,445.70" fill="#222"/>
<text x="886.75" y="451.5" dy="2.88" font-size="8" text-anchor="middle" fill="#333" transform="rotate(-90 886.75 451.5)" >0</text>
<text x="939" y="452" dy="2.70" font-size="7.5" text-anchor="middle" fill="#333" transform="rotate(-80 939 452)" >16</text>
<text x="1002.5" y="452.5" dy="2.81" font-size="7.8" text-anchor="middle" fill="#333" transform="rotate(-90 1002.5 452.5)" >35</text>
<text x="1027.5" y="453.5" dy="2.81" font-size="7.8" text-anchor="middle" fill="#333" transform="rotate(-90 1027.5 453.5)" >43</text>
<text x="1050.5" y="459.5" dy="2.88" font-size="8" text-anchor="middle" fill="#333" transform="rotate(-90 1050.5 459.5)" >49.87</text>
<text x="1088.75" y="459" dy="2.88" font-size="8" text-anchor="middle" fill="#333" transform="rotate(-90 1088.75 459)" >53.01</text>
<line x1="1005" y1="402" x2="1005" y2="482.75" stroke="#c4c4c4" stroke-width="0.7" />
<line x1="933.25" y1="471" x2="944.5" y2="471" stroke="#aaa" stroke-width="0.7" />
<line x1="995.5" y1="471" x2="1004.5" y2="471" stroke="#666" stroke-width="0.8" />
<polygon points="1004.50,471.00 1000.50,471.90 1000.50,470.10" fill="#222"/>
<rect x="881.25" y="465.25" width="52.0" height="11.75" fill="#fff" stroke="#aaa" stroke-width="0.9"/>
<line x1="900.75" y1="465.25" x2="900.75" y2="477" stroke="#aaa" stroke-width="0.9" />
<line x1="923.75" y1="465.25" x2="923.75" y2="477" stroke="#aaa" stroke-width="0.9" />
<line x1="891.0" y1="466.75" x2="891.0" y2="475.5" stroke="#444" stroke-width="0.8" />
<line x1="886.0" y1="475.5" x2="896.0" y2="475.5" stroke="#666" stroke-width="1.1" />
<text x="912.25" y="471.425" dy="3.10" font-size="8.6" text-anchor="middle" fill="#555" letter-spacing="0.4">0.02</text>
<text x="928.5" y="471.425" dy="3.10" font-size="8.6" text-anchor="middle" fill="#555" letter-spacing="0.4">B</text>
<line x1="1054.25" y1="175.75" x2="1085" y2="175.75" stroke="#4a4a4a" stroke-width="0.8" />
<line x1="1054.25" y1="198.75" x2="1085" y2="198.75" stroke="#999" stroke-width="0.7" />
<line x1="1082.5" y1="175.75" x2="1082.5" y2="198.75" stroke="#333" stroke-width="0.8" />
<polygon points="1082.50,175.75 1083.50,180.75 1081.50,180.75" fill="#222"/>
<polygon points="1082.50,198.75 1081.50,193.75 1083.50,193.75" fill="#222"/>
<text x="1078.5" y="187.5" dy="2.70" font-size="7.5" text-anchor="middle" fill="#333" transform="rotate(-90 1078.5 187.5)" >(7)</text>
<text x="1103" y="144.5" dy="2.99" font-size="8.3" text-anchor="middle" fill="#444" font-family="Liberation Mono" textLength="30">Bezug A</text>
<line x1="1085.5" y1="144.5" x2="943.5" y2="161.8" stroke="#666" stroke-width="0.7" stroke-dasharray="7 1.5"/>
<line x1="943.5" y1="161.8" x2="943.5" y2="176" stroke="#666" stroke-width="0.7" stroke-dasharray="4 1.5"/>
<path d="M1084 145.500 Q1056 158 1051 168 Q1048 176 1046.750 185.500" fill="none" stroke="#666" stroke-width="0.7" />
<circle cx="1046.5" cy="186" r="0.8" fill="#333"/>
<polyline points="1208.75,138.25 1189.25,138.25 1082.6,244.9" fill="none" stroke="#555" stroke-width="0.8" stroke-linejoin="miter" />
<polygon points="1082.60,244.90 1086.14,239.95 1087.55,241.36" fill="#222"/>
<polyline points="1195.5,158.25 1096.3,257.5" fill="none" stroke="#555" stroke-width="0.8" stroke-linejoin="miter" />
<line x1="1215.5" y1="158.25" x2="1195.5" y2="158.25" stroke="#bbb" stroke-width="0.7" />
<polygon points="1096.30,257.50 1099.84,252.55 1101.25,253.96" fill="#222"/>
<rect x="1208.75" y="132.75" width="51.75" height="11.25" fill="#fff" stroke="#777" stroke-width="0.9"/>
<line x1="1228" y1="132.75" x2="1228" y2="144" stroke="#777" stroke-width="0.9" />
<line x1="1249.25" y1="132.75" x2="1249.25" y2="144" stroke="#777" stroke-width="0.9" />
<line x1="1218.375" y1="134.25" x2="1218.375" y2="142.5" stroke="#444" stroke-width="0.8" />
<line x1="1213.375" y1="142.5" x2="1223.375" y2="142.5" stroke="#666" stroke-width="1.1" />
<text x="1238.625" y="138.675" dy="3.10" font-size="8.6" text-anchor="middle" fill="#444" letter-spacing="0.4">0.01</text>
<text x="1254.875" y="138.675" dy="3.10" font-size="8.6" text-anchor="middle" fill="#444" letter-spacing="0.4">A</text>
<rect x="1215.5" y="152.5" width="48.25" height="11.5" fill="#fff" stroke="#888" stroke-width="0.9"/>
<line x1="1231" y1="152.5" x2="1231" y2="164" stroke="#888" stroke-width="0.9" />
<line x1="1253.5" y1="152.5" x2="1253.5" y2="164" stroke="#888" stroke-width="0.9" />
<polyline points="1228.25,155.0 1219.25,161.5 1228.25,161.5" fill="none" stroke="#333" stroke-width="0.9" stroke-linejoin="miter" />
<text x="1242.25" y="158.55" dy="3.10" font-size="8.6" text-anchor="middle" fill="#444" letter-spacing="0.4">0.01</text>
<text x="1258.625" y="158.55" dy="3.10" font-size="8.6" text-anchor="middle" fill="#444" letter-spacing="0.4">B</text>
<line x1="1176.75" y1="224.8" x2="1176.75" y2="391" stroke="#3a3a3a" stroke-width="0.9" />
<polygon points="1176.75,224.80 1177.75,230.80 1175.75,230.80" fill="#222"/>
<polygon points="1176.75,263.75 1177.75,267.75 1175.75,267.75" fill="#222"/>
<polygon points="1176.75,354.25 1177.75,358.25 1175.75,358.25" fill="#222"/>
<polygon points="1176.75,390.50 1177.75,394.50 1175.75,394.50" fill="#222"/>
<text x="1181" y="220" dy="2.99" font-size="8.3" text-anchor="middle" fill="#444" >12</text>
<text x="1179.5" y="260.5" dy="2.99" font-size="8.3" text-anchor="start" fill="#444" >0</text>
<text x="1178.5" y="351" dy="2.99" font-size="8.3" text-anchor="start" fill="#444" >35</text>
<text x="1177.5" y="386.3" dy="2.99" font-size="8.3" text-anchor="start" fill="#444" letter-spacing="0.2">38.5±0.15</text>
<path d="M1106.500 271.750 A50 50 0 0 0 1106.500 334.250" fill="none" stroke="#555" stroke-width="0.8" />
<polygon points="1107.50,270.60 1105.05,275.07 1103.52,273.79" fill="#222"/>
<polygon points="1107.50,335.40 1103.52,332.21 1105.05,330.93" fill="#222"/>
<line x1="1101.75" y1="263.75" x2="1101.75" y2="334.5" stroke="#aaa" stroke-width="0.7" stroke-dasharray="6 3"/>
<text x="1084" y="303.5" dy="2.99" font-size="8.3" text-anchor="middle" fill="#444" transform="rotate(-82 1084 303.5)" >90°±1.5'</text>
<line x1="1133" y1="295.5" x2="1160.5" y2="295.5" stroke="#4a4a4a" stroke-width="0.8" />
<line x1="1133" y1="309.25" x2="1160.5" y2="309.25" stroke="#4a4a4a" stroke-width="0.8" />
<line x1="1159.25" y1="283" x2="1159.25" y2="339.5" stroke="#444" stroke-width="0.8" />
<polygon points="1159.25,295.50 1158.25,290.00 1160.25,290.00" fill="#222"/>
<polygon points="1159.25,309.25 1160.25,314.75 1158.25,314.75" fill="#222"/>
<text x="1155" y="329" dy="2.81" font-size="7.8" text-anchor="middle" fill="#333" transform="rotate(-90 1155 329)" >14.380</text>
<line x1="1158.2" y1="318" x2="1158.2" y2="340" stroke="#555" stroke-width="0.7" />
<polyline points="1064.25,378.5 1160.5,378.5 1168,354.25 1176.75,354.25" fill="none" stroke="#666" stroke-width="0.8" stroke-linejoin="miter" />
<line x1="1054.25" y1="389.25" x2="1088" y2="389.25" stroke="#999" stroke-width="0.7" />
<line x1="1116.75" y1="389.25" x2="1176.75" y2="389.25" stroke="#888" stroke-width="0.7" />
<line x1="1101.5" y1="379" x2="1101.5" y2="402" stroke="#333" stroke-width="0.8" />
<polygon points="1101.50,379.00 1102.50,384.00 1100.50,384.00" fill="#222"/>
<polygon points="1101.50,402.00 1100.50,397.00 1102.50,397.00" fill="#222"/>
<text x="1097.5" y="389.5" dy="2.70" font-size="7.5" text-anchor="middle" fill="#333" transform="rotate(-90 1097.5 389.5)" >(7)</text>
<polyline points="1186.75,424.75 1168,424.75 1093,350" fill="none" stroke="#555" stroke-width="0.8" stroke-linejoin="miter" />
<polygon points="1093.00,350.00 1097.95,353.54 1096.54,354.95" fill="#222"/>
<rect x="1186.75" y="418.5" width="52.5" height="11.75" fill="#fff" stroke="#777" stroke-width="0.9"/>
<line x1="1206" y1="418.5" x2="1206" y2="430.25" stroke="#777" stroke-width="0.9" />
<line x1="1228" y1="418.5" x2="1228" y2="430.25" stroke="#777" stroke-width="0.9" />
<line x1="1196.375" y1="420.0" x2="1196.375" y2="428.75" stroke="#444" stroke-width="0.8" />
<line x1="1191.375" y1="428.75" x2="1201.375" y2="428.75" stroke="#666" stroke-width="1.1" />
<text x="1217.0" y="424.675" dy="3.10" font-size="8.6" text-anchor="middle" fill="#444" letter-spacing="0.4">0.01</text>
<text x="1233.625" y="424.675" dy="3.10" font-size="8.6" text-anchor="middle" fill="#444" letter-spacing="0.4">A</text>
<polyline points="611.25,493.25 639.25,493.25 639.25,527" fill="none" stroke="#333" stroke-width="1" stroke-linejoin="miter" />
<polygon points="639.25,493.25 634.25,494.25 634.25,492.25" fill="#222"/>
<text x="694.5" y="516.5" dy="2.88" font-size="8" text-anchor="middle" fill="#444" >11.75</text>
<line x1="857.5" y1="515.25" x2="937.5" y2="515.25" stroke="#3a3a3a" stroke-width="0.9" />
<line x1="857.5" y1="515.25" x2="857.5" y2="527" stroke="#333" stroke-width="0.9" />
<line x1="890.5" y1="515.25" x2="890.5" y2="527" stroke="#333" stroke-width="0.9" />
<polygon points="857.50,515.25 862.50,514.25 862.50,516.25" fill="#222"/>
<polygon points="890.50,515.25 886.50,516.25 886.50,514.25" fill="#222"/>
<polygon points="937.50,515.25 933.50,516.25 933.50,514.25" fill="#222"/>
<text x="853.75" y="509.5" dy="2.70" font-size="7.5" text-anchor="middle" fill="#333" transform="rotate(-80 853.75 509.5)" >10</text>
<text x="886.75" y="512" dy="2.70" font-size="7.5" text-anchor="middle" fill="#333" transform="rotate(-90 886.75 512)" >0</text>
<text x="932.5" y="509.5" dy="2.70" font-size="7.5" text-anchor="middle" fill="#333" transform="rotate(-70 932.5 509.5)" >14</text>
<polyline points="1145,514.5 1152.25,515.25 1152.25,527" fill="none" stroke="#333" stroke-width="0.9" stroke-linejoin="miter" />
<circle cx="665" cy="533.5" r="10.3" fill="none" stroke="#9a9adf" stroke-width="1"/>
<circle cx="713.75" cy="533.5" r="10.3" fill="none" stroke="#9a9adf" stroke-width="1"/>
<circle cx="753.75" cy="533.5" r="10.3" fill="none" stroke="#9a9adf" stroke-width="1"/>
<circle cx="825" cy="533.5" r="10.3" fill="none" stroke="#9a9adf" stroke-width="1"/>
<path d="M1301.500 527 Q1310 508 1326 500" fill="none" stroke="#555" stroke-width="0.8" />
<text x="1365.5" y="448" dy="2.99" font-size="8.3" text-anchor="middle" fill="#333" font-family="Liberation Mono" textLength="44">M2-7/9 tief</text>
<polyline points="1388,448 1398,448 1398,456" fill="none" stroke="#444" stroke-width="0.8" stroke-linejoin="miter" />
<text x="1416" y="526" dy="3.46" font-size="9.6" text-anchor="middle" fill="#23238e" textLength="18" lengthAdjust="spacingAndGlyphs">(980</text>
<path d="M1423.500 497 l3 -2 M1423.500 510 q3 -6 2 -12 M1423.500 518 l4 8" fill="none" stroke="#333" stroke-width="0.9" />
<circle cx="647.5" cy="81" r="10.3" fill="none" stroke="#8585e0" stroke-width="1"/>
<text x="647.5" y="80.1" dy="3.46" font-size="9.6" text-anchor="middle" fill="#23238e" textLength="9.2" lengthAdjust="spacingAndGlyphs">90</text>
<circle cx="647" cy="112.7" r="10.3" fill="none" stroke="#8585e0" stroke-width="1"/>
<text x="647" y="111.8" dy="3.46" font-size="9.6" text-anchor="middle" fill="#23238e" textLength="9.2" lengthAdjust="spacingAndGlyphs">70</text>
<circle cx="797.5" cy="120.3" r="10.3" fill="none" stroke="#8585e0" stroke-width="1"/>
<text x="797.5" y="119.39999999999999" dy="3.46" font-size="9.6" text-anchor="middle" fill="#23238e" textLength="14.6" lengthAdjust="spacingAndGlyphs">100</text>
<circle cx="860.75" cy="128.3" r="10.3" fill="none" stroke="#8585e0" stroke-width="1"/>
<text x="860.75" y="127.4" dy="3.46" font-size="9.6" text-anchor="middle" fill="#23238e" textLength="14.6" lengthAdjust="spacingAndGlyphs">110</text>
<circle cx="906.25" cy="131.5" r="10.3" fill="none" stroke="#8585e0" stroke-width="1"/>
<text x="906.25" y="130.6" dy="3.46" font-size="9.6" text-anchor="middle" fill="#23238e" textLength="14.6" lengthAdjust="spacingAndGlyphs">120</text>
<circle cx="901.25" cy="92" r="10.3" fill="none" stroke="#8585e0" stroke-width="1"/>
<text x="901.25" y="91.1" dy="3.46" font-size="9.6" text-anchor="middle" fill="#23238e" textLength="14.6" lengthAdjust="spacingAndGlyphs">130</text>
<circle cx="949.25" cy="82.6" r="10.3" fill="none" stroke="#8585e0" stroke-width="1"/>
<text x="949.25" y="81.69999999999999" dy="3.46" font-size="9.6" text-anchor="middle" fill="#23238e" textLength="14.6" lengthAdjust="spacingAndGlyphs">140</text>
<circle cx="948.2" cy="127.75" r="10.3" fill="none" stroke="#8585e0" stroke-width="1"/>
<text x="948.2" y="126.85" dy="3.46" font-size="9.6" text-anchor="middle" fill="#23238e" textLength="14.6" lengthAdjust="spacingAndGlyphs">150</text>
<circle cx="749.25" cy="158.3" r="10.3" fill="none" stroke="#8585e0" stroke-width="1"/>
<text x="749.25" y="157.4" dy="3.46" font-size="9.6" text-anchor="middle" fill="#23238e" textLength="9.2" lengthAdjust="spacingAndGlyphs">80</text>
<circle cx="792.5" cy="174.5" r="10.3" fill="none" stroke="#8585e0" stroke-width="1"/>
<text x="792.5" y="173.6" dy="3.46" font-size="9.6" text-anchor="middle" fill="#23238e" textLength="9.2" lengthAdjust="spacingAndGlyphs">60</text>
<circle cx="731.75" cy="186.5" r="10.3" fill="none" stroke="#8585e0" stroke-width="1"/>
<text x="731.75" y="185.6" dy="3.46" font-size="9.6" text-anchor="middle" fill="#23238e" textLength="9.2" lengthAdjust="spacingAndGlyphs">50</text>
<circle cx="751.25" cy="203.5" r="10.3" fill="none" stroke="#8585e0" stroke-width="1"/>
<text x="751.25" y="202.6" dy="3.46" font-size="9.6" text-anchor="middle" fill="#23238e" textLength="9.2" lengthAdjust="spacingAndGlyphs">40</text>
<circle cx="792.5" cy="217.5" r="10.3" fill="none" stroke="#8585e0" stroke-width="1"/>
<text x="792.5" y="216.6" dy="3.46" font-size="9.6" text-anchor="middle" fill="#23238e" textLength="9.2" lengthAdjust="spacingAndGlyphs">30</text>
<circle cx="754.25" cy="238.4" r="10.3" fill="none" stroke="#8585e0" stroke-width="1"/>
<text x="754.25" y="237.5" dy="3.46" font-size="9.6" text-anchor="middle" fill="#23238e" textLength="9.2" lengthAdjust="spacingAndGlyphs">20</text>
<circle cx="984.75" cy="94" r="10.3" fill="none" stroke="#8585e0" stroke-width="1"/>
<text x="984.75" y="93.1" dy="3.46" font-size="9.6" text-anchor="middle" fill="#23238e" textLength="14.6" lengthAdjust="spacingAndGlyphs">160</text>
<circle cx="1001.75" cy="127.75" r="10.3" fill="none" stroke="#8585e0" stroke-width="1"/>
<text x="1001.75" y="126.85" dy="3.46" font-size="9.6" text-anchor="middle" fill="#23238e" textLength="14.6" lengthAdjust="spacingAndGlyphs">170</text>
<circle cx="1043.75" cy="85.75" r="10.3" fill="none" stroke="#8585e0" stroke-width="1"/>
<text x="1043.75" y="84.85" dy="3.46" font-size="9.6" text-anchor="middle" fill="#23238e" textLength="14.6" lengthAdjust="spacingAndGlyphs">180</text>
<circle cx="1068" cy="93.25" r="10.3" fill="none" stroke="#8585e0" stroke-width="1"/>
<text x="1068" y="92.35" dy="3.46" font-size="9.6" text-anchor="middle" fill="#23238e" textLength="14.6" lengthAdjust="spacingAndGlyphs">190</text>
<circle cx="1146.75" cy="120.3" r="10.3" fill="none" stroke="#8585e0" stroke-width="1"/>
<text x="1146.75" y="119.39999999999999" dy="3.46" font-size="9.6" text-anchor="middle" fill="#23238e" textLength="14.6" lengthAdjust="spacingAndGlyphs">200</text>
<circle cx="1203" cy="121.5" r="10.3" fill="none" stroke="#8585e0" stroke-width="1"/>
<text x="1203" y="120.6" dy="3.46" font-size="9.6" text-anchor="middle" fill="#23238e" textLength="14.6" lengthAdjust="spacingAndGlyphs">210</text>
<circle cx="1209.75" cy="175.3" r="10.3" fill="none" stroke="#8585e0" stroke-width="1"/>
<text x="1209.75" y="174.4" dy="3.46" font-size="9.6" text-anchor="middle" fill="#23238e" textLength="14.6" lengthAdjust="spacingAndGlyphs">220</text>
<circle cx="1195.5" cy="238.4" r="10.3" fill="none" stroke="#8585e0" stroke-width="1"/>
<text x="1195.5" y="237.5" dy="3.46" font-size="9.6" text-anchor="middle" fill="#23238e" textLength="14.6" lengthAdjust="spacingAndGlyphs">230</text>
<circle cx="617.5" cy="255.5" r="10.3" fill="none" stroke="#8585e0" stroke-width="1"/>
<text x="617.5" y="254.6" dy="3.46" font-size="9.6" text-anchor="middle" fill="#23238e" textLength="9.2" lengthAdjust="spacingAndGlyphs">10</text>
<circle cx="797.5" cy="263.5" r="10.3" fill="none" stroke="#8585e0" stroke-width="1"/>
<text x="797.5" y="262.6" dy="3.46" font-size="9.6" text-anchor="middle" fill="#23238e" textLength="14.6" lengthAdjust="spacingAndGlyphs">440</text>
<circle cx="747.5" cy="311" r="10.3" fill="none" stroke="#8585e0" stroke-width="1"/>
<text x="747.5" y="310.1" dy="3.46" font-size="9.6" text-anchor="middle" fill="#23238e" textLength="14.6" lengthAdjust="spacingAndGlyphs">430</text>
<circle cx="792.5" cy="311" r="10.3" fill="none" stroke="#8585e0" stroke-width="1"/>
<text x="792.5" y="310.1" dy="3.46" font-size="9.6" text-anchor="middle" fill="#23238e" textLength="14.6" lengthAdjust="spacingAndGlyphs">420</text>
<circle cx="736.75" cy="337.5" r="10.3" fill="none" stroke="#8585e0" stroke-width="1"/>
<text x="736.75" y="336.6" dy="3.46" font-size="9.6" text-anchor="middle" fill="#23238e" textLength="14.6" lengthAdjust="spacingAndGlyphs">410</text>
<circle cx="802.3" cy="392.1" r="10.3" fill="none" stroke="#8585e0" stroke-width="1"/>
<text x="802.3" y="391.20000000000005" dy="3.46" font-size="9.6" text-anchor="middle" fill="#23238e" textLength="14.6" lengthAdjust="spacingAndGlyphs">390</text>
<circle cx="749.5" cy="398" r="10.3" fill="none" stroke="#8585e0" stroke-width="1"/>
<text x="749.5" y="397.1" dy="3.46" font-size="9.6" text-anchor="middle" fill="#23238e" textLength="14.6" lengthAdjust="spacingAndGlyphs">380</text>
<circle cx="1066.75" cy="328" r="10.3" fill="none" stroke="#8585e0" stroke-width="1"/>
<text x="1066.75" y="327.1" dy="3.46" font-size="9.6" text-anchor="middle" fill="#23238e" textLength="14.6" lengthAdjust="spacingAndGlyphs">240</text>
<circle cx="1195.5" cy="368" r="10.3" fill="none" stroke="#8585e0" stroke-width="1"/>
<text x="1195.5" y="367.1" dy="3.46" font-size="9.6" text-anchor="middle" fill="#23238e" textLength="14.6" lengthAdjust="spacingAndGlyphs">250</text>
<circle cx="1169.25" cy="404" r="10.3" fill="none" stroke="#8585e0" stroke-width="1"/>
<text x="1169.25" y="403.1" dy="3.46" font-size="9.6" text-anchor="middle" fill="#23238e" textLength="14.6" lengthAdjust="spacingAndGlyphs">260</text>
<circle cx="1181.75" cy="442.3" r="10.3" fill="none" stroke="#8585e0" stroke-width="1"/>
<text x="1181.75" y="441.40000000000003" dy="3.46" font-size="9.6" text-anchor="middle" fill="#23238e" textLength="14.6" lengthAdjust="spacingAndGlyphs">270</text>
<circle cx="943.5" cy="361.3" r="10.3" fill="none" stroke="#8585e0" stroke-width="1"/>
<text x="943.5" y="360.40000000000003" dy="3.46" font-size="9.6" text-anchor="middle" fill="#23238e" textLength="14.6" lengthAdjust="spacingAndGlyphs">340</text>
<circle cx="1000.5" cy="361.3" r="10.3" fill="none" stroke="#8585e0" stroke-width="1"/>
<text x="1000.5" y="360.40000000000003" dy="3.46" font-size="9.6" text-anchor="middle" fill="#23238e" textLength="14.6" lengthAdjust="spacingAndGlyphs">320</text>
<circle cx="966.75" cy="401.7" r="10.3" fill="none" stroke="#8585e0" stroke-width="1"/>
<text x="966.75" y="400.8" dy="3.46" font-size="9.6" text-anchor="middle" fill="#23238e" textLength="14.6" lengthAdjust="spacingAndGlyphs">350</text>
<circle cx="1052.25" cy="422" r="10.3" fill="none" stroke="#8585e0" stroke-width="1"/>
<text x="1052.25" y="421.1" dy="3.46" font-size="9.6" text-anchor="middle" fill="#23238e" textLength="14.6" lengthAdjust="spacingAndGlyphs">290</text>
<circle cx="956.5" cy="466.5" r="10.3" fill="none" stroke="#8585e0" stroke-width="1"/>
<text x="956.5" y="465.6" dy="3.46" font-size="9.6" text-anchor="middle" fill="#23238e" textLength="14.6" lengthAdjust="spacingAndGlyphs">360</text>
<circle cx="984.75" cy="466.5" r="10.3" fill="none" stroke="#8585e0" stroke-width="1"/>
<text x="984.75" y="465.6" dy="3.46" font-size="9.6" text-anchor="middle" fill="#23238e" textLength="14.6" lengthAdjust="spacingAndGlyphs">330</text>
<circle cx="1028" cy="474.75" r="10.3" fill="none" stroke="#8585e0" stroke-width="1"/>
<text x="1028" y="473.85" dy="3.46" font-size="9.6" text-anchor="middle" fill="#23238e" textLength="14.6" lengthAdjust="spacingAndGlyphs">310</text>
<circle cx="1050.5" cy="487.3" r="10.3" fill="none" stroke="#8585e0" stroke-width="1"/>
<text x="1050.5" y="486.40000000000003" dy="3.46" font-size="9.6" text-anchor="middle" fill="#23238e" textLength="14.6" lengthAdjust="spacingAndGlyphs">300</text>
<circle cx="1089.25" cy="486.5" r="10.3" fill="none" stroke="#8585e0" stroke-width="1"/>
<text x="1089.25" y="485.6" dy="3.46" font-size="9.6" text-anchor="middle" fill="#23238e" textLength="14.6" lengthAdjust="spacingAndGlyphs">280</text>
<circle cx="867.5" cy="471.5" r="10.3" fill="none" stroke="#8585e0" stroke-width="1"/>
<text x="867.5" y="470.6" dy="3.46" font-size="9.6" text-anchor="middle" fill="#23238e" textLength="14.6" lengthAdjust="spacingAndGlyphs">370</text>
<circle cx="871.25" cy="497.3" r="10.3" fill="none" stroke="#8585e0" stroke-width="1"/>
<text x="871.25" y="496.40000000000003" dy="3.46" font-size="9.6" text-anchor="middle" fill="#23238e" textLength="14.6" lengthAdjust="spacingAndGlyphs">820</text>
<circle cx="948.9" cy="523.3" r="10.3" fill="none" stroke="#8585e0" stroke-width="1"/>
<text x="948.9" y="522.4" dy="3.46" font-size="9.6" text-anchor="middle" fill="#23238e" textLength="14.6" lengthAdjust="spacingAndGlyphs">830</text>
<circle cx="676.25" cy="516.5" r="10.3" fill="none" stroke="#8585e0" stroke-width="1"/>
<text x="676.25" y="515.6" dy="3.46" font-size="9.6" text-anchor="middle" fill="#23238e" textLength="14.6" lengthAdjust="spacingAndGlyphs">740</text>
<circle cx="1169.25" cy="515.75" r="10.3" fill="none" stroke="#8585e0" stroke-width="1"/>
<text x="1169.25" y="514.85" dy="3.46" font-size="9.6" text-anchor="middle" fill="#23238e" textLength="14.6" lengthAdjust="spacingAndGlyphs">840</text>
<circle cx="1327.6" cy="453" r="10.3" fill="none" stroke="#8585e0" stroke-width="1"/>
<text x="1327.6" y="452.1" dy="3.46" font-size="9.6" text-anchor="middle" fill="#23238e" textLength="14.6" lengthAdjust="spacingAndGlyphs">880</text>
<circle cx="1322.7" cy="472.2" r="10.3" fill="none" stroke="#8585e0" stroke-width="1"/>
<text x="1322.7" y="471.3" dy="3.46" font-size="9.6" text-anchor="middle" fill="#23238e" textLength="14.6" lengthAdjust="spacingAndGlyphs">870</text>
<circle cx="930" cy="281" r="10.3" fill="none" stroke="#f0c060" stroke-width="1"/>
<text x="930" y="280.1" dy="3.46" font-size="9.6" text-anchor="middle" fill="#e8a020" textLength="14.6" lengthAdjust="spacingAndGlyphs">400</text>
<polygon points="662.36,81.00 657.16,83.60 657.16,78.40" fill="#1212d8"/>
<polygon points="651.64,100.80 656.84,98.20 656.84,103.40" fill="#1212d8"/>
<polygon points="810.02,111.28 808.18,116.79 804.51,113.12" fill="#1212d8"/>
<polygon points="860.75,111.64 863.35,116.84 858.15,116.84" fill="#1212d8"/>
<polygon points="903.75,146.86 901.15,141.66 906.35,141.66" fill="#1212d8"/>
<polygon points="916.61,92.00 911.41,94.60 911.41,89.40" fill="#1212d8"/>
<polygon points="936.50,87.18 939.97,91.85 934.85,92.76" fill="#1212d8"/>
<polygon points="947.80,110.64 950.40,115.84 945.20,115.84" fill="#1212d8"/>
<polygon points="970.98,103.32 972.82,97.81 976.49,101.48" fill="#1212d8"/>
<polygon points="1001.75,111.14 1004.35,116.34 999.15,116.34" fill="#1212d8"/>
<polygon points="1029.73,94.32 1031.57,88.81 1035.24,92.48" fill="#1212d8"/>
<polygon points="1053.98,102.32 1055.82,96.81 1059.49,100.48" fill="#1212d8"/>
<polygon points="1132.73,111.28 1138.24,113.12 1134.57,116.79" fill="#1212d8"/>
<polygon points="1208.80,135.12 1207.15,129.54 1212.27,130.45" fill="#1212d8"/>
<polygon points="1218.32,161.98 1216.48,167.49 1212.81,163.82" fill="#1212d8"/>
<polygon points="1185.98,224.28 1191.49,226.12 1187.82,229.79" fill="#1212d8"/>
<polygon points="1080.02,318.48 1078.18,323.99 1074.51,320.32" fill="#1212d8"/>
<polygon points="1185.98,355.28 1191.49,357.12 1187.82,360.79" fill="#1212d8"/>
<polygon points="1177.52,390.78 1175.68,396.29 1172.01,392.62" fill="#1212d8"/>
<polygon points="1190.32,428.28 1188.48,433.79 1184.81,430.12" fill="#1212d8"/>
<polygon points="1088.75,469.64 1091.35,474.84 1086.15,474.84" fill="#1212d8"/>
<polygon points="1049.75,470.64 1052.35,475.84 1047.15,475.84" fill="#1212d8"/>
<polygon points="1027.25,457.94 1029.85,463.14 1024.65,463.14" fill="#1212d8"/>
<polygon points="997.52,456.98 995.68,462.49 992.01,458.82" fill="#1212d8"/>
<polygon points="942.73,456.98 948.24,458.82 944.57,462.49" fill="#1212d8"/>
<polygon points="1035.14,422.00 1040.34,419.40 1040.34,424.60" fill="#1212d8"/>
<polygon points="982.64,360.70 987.84,358.10 987.84,363.30" fill="#1212d8"/>
<polygon points="959.61,361.60 954.41,364.20 954.41,359.00" fill="#1212d8"/>
<polygon points="965.50,384.94 968.10,390.14 962.90,390.14" fill="#1212d8"/>
<polygon points="883.36,471.50 878.16,474.10 878.16,468.90" fill="#1212d8"/>
<polygon points="765.36,398.00 760.16,400.60 760.16,395.40" fill="#1212d8"/>
<polygon points="802.00,375.44 804.60,380.64 799.40,380.64" fill="#1212d8"/>
<polygon points="753.61,337.50 748.41,340.10 748.41,334.90" fill="#1212d8"/>
<polygon points="775.64,311.00 780.84,308.40 780.84,313.60" fill="#1212d8"/>
<polygon points="756.27,297.28 754.43,302.79 750.76,299.12" fill="#1212d8"/>
<polygon points="796.25,279.36 793.65,274.16 798.85,274.16" fill="#1212d8"/>
<polygon points="769.86,238.40 764.66,241.00 764.66,235.80" fill="#1212d8"/>
<polygon points="775.64,217.50 780.84,214.90 780.84,220.10" fill="#1212d8"/>
<polygon points="766.61,203.50 761.41,206.10 761.41,200.90" fill="#1212d8"/>
<polygon points="747.36,186.50 742.16,189.10 742.16,183.90" fill="#1212d8"/>
<polygon points="775.64,174.50 780.84,171.90 780.84,177.10" fill="#1212d8"/>
<polygon points="765.36,158.30 760.16,160.90 760.16,155.70" fill="#1212d8"/>
<polygon points="633.36,255.50 628.16,258.10 628.16,252.90" fill="#1212d8"/>
<polygon points="856.73,506.02 858.57,500.51 862.24,504.18" fill="#1212d8"/>
<polygon points="935.48,513.98 940.99,515.82 937.32,519.49" fill="#1212d8"/>
<polygon points="702.98,520.28 708.49,522.12 704.82,525.79" fill="#1212d8"/>
<polygon points="1150.14,515.75 1155.34,513.15 1155.34,518.35" fill="#1212d8"/>
<polygon points="1342.86,453.00 1337.66,455.60 1337.66,450.40" fill="#1212d8"/>
<polygon points="683.00,524.14 685.60,529.34 680.40,529.34" fill="#1212d8"/>
<polygon points="915.86,292.14 917.81,286.31 921.69,290.19" fill="#e8a020"/>
</svg>
<div class="abs" style="left:584.7px;top:79.7px;width:12.6px;height:12.6px;border-radius:50%;background:#585858"></div>
<div class="abs" style="left:587px;top:84.9px;width:8px;height:2.2px;background:#fff"></div>
<div class="abs" style="left:589.9px;top:82px;width:2.2px;height:8px;background:#fff"></div>
<div class="abs" style="left:584.7px;top:102.4px;width:12.6px;height:12.6px;border-radius:50%;background:#585858"></div>
<div class="abs" style="left:584.7px;top:104.2px;width:12.6px;height:9px;line-height:9px;font-size:7.5px;font-weight:bold;color:#fff;text-align:center;letter-spacing:-0.6px">1:1</div>
<div class="abs" style="left:584.7px;top:125.10000000000001px;width:12.6px;height:12.6px;border-radius:50%;background:#585858"></div>
<div class="abs" style="left:587px;top:130.3px;width:8px;height:2.2px;background:#fff"></div>
<div class="abs" style="left:583px;top:498px;width:22px;height:22px;border-radius:50%;background:#fff;box-shadow:0 1px 3px rgba(0,0,0,.35)"></div>
<svg class="abs" style="left:588px;top:503px" width="12" height="12" viewBox="0 0 24 24"><path fill="#777" d="M16.480 2.520c3.270 1.550 5.610 4.720 5.970 8.480h1.500C23.440 4.840 18.290 0 12 0l-.66.030 3.810 3.810 1.330-1.320zm-6.250-.77c-.59-.59-1.540-.59-2.120 0L1.750 8.110c-.59.590-.59 1.540 0 2.120l12.020 12.020c.59.590 1.540.590 2.120 0l6.360-6.360c.59-.59.590-1.540 0-2.120L10.230 1.750zm4.600 19.440L2.810 9.170l6.360-6.360 12.020 12.020-6.360 6.360zm-7.310.29C4.250 19.940 1.910 16.760 1.550 13H.05C.56 19.160 5.710 24 12 24l.66-.03-3.810-3.810-1.330 1.320z"/></svg>
<div class="abs" style="left:1325.5px;top:454.5px;width:97.5px;height:69px;border:3px solid #1e1e1e;border-radius:4px;background:rgba(255,255,255,.93)"></div>
<svg class="abs" style="left:1328px;top:457px" width="92" height="64" viewBox="1328 457 92 64"><g fill="none" stroke="#cfcfcf" stroke-width="0.8"><path d="M1330 512 Q1372 468 1420 488"/><path d="M1332 483h10M1346 484h18M1372 483h8M1392 483h6M1404 482h10" stroke="#c6c6c6" stroke-width="2"/><path d="M1333 497h8M1352 494v12M1347 500h10M1373 492v14M1396 496v12M1400 494v12M1392 500h14" stroke="#d2d2d2" stroke-width="1.6"/><circle cx="1335" cy="510" r="2.500"/><circle cx="1356" cy="514" r="2"/><circle cx="1352" cy="497" r="1.500"/><path d="M1395 463l10 8M1405 463l-10 8M1400 461v12M1393 467h14" stroke="#d6d6d6" stroke-width="1.2"/><path d="M1346 465h3M1353 464h4M1350 470v5M1357 468v6M1362 463v3" stroke="#d0d0d0" stroke-width="1.2"/><path d="M1338 518h10M1366 516h6" stroke="#d8d8d8" stroke-width="1.5"/></g></svg>
<div class="abs" style="left:1340.3px;top:459.3px;width:40.6px;height:20px;border:1.3px solid #d94a3c"></div>
<div class="abs" style="left:1408.6px;top:509.8px;width:10px;height:10px;border-radius:50%;background:#777"></div>
<div class="abs" style="left:1410.6px;top:513.9px;width:6px;height:1.8px;background:#fff"></div>
<div class="abs" style="left:576.4px;top:553.40px;font-size:10.6px;line-height:12px;white-space:pre;color:#222;letter-spacing:0.017px;">Inspection equipment</div>
<div class="abs" style="left:576px;top:567.8px;width:139.8px;height:41.8px;border:1px solid #cfcfcf;border-radius:2px"></div>
<div class="abs" style="left:576.4px;top:623.70px;font-size:10.6px;line-height:12px;white-space:pre;color:#222;letter-spacing:-0.056px;">Comments</div>
<div class="abs" style="left:576px;top:637.6px;width:139.8px;height:80px;border:1px solid #cfcfcf;border-radius:2px"></div>
<svg class="abs" style="left:730px;top:546px" width="8" height="4" viewBox="0 0 10 5"><path fill="#999" d="M0 5h10L5 0z"/></svg>
<svg class="abs" style="left:730px;top:693px" width="8" height="4" viewBox="0 0 10 5"><path fill="#999" d="M0 0h10L5 5z"/></svg>
<div class="abs" style="left:731px;top:556px;width:6px;height:15.5px;border-radius:3px;background:#858585"></div>
<div class="abs" style="left:739.5px;top:541px;width:1px;height:162px;background:#ececec"></div>
<div class="abs" style="left:753px;top:555.00px;font-size:12.3px;line-height:14px;white-space:pre;color:#222;letter-spacing:-0.173px;">Cavity No.</div>
<div class="abs" style="left:752.5px;top:573px;width:54.5px;height:37px;background:#f3f3f3;border:1px solid #eeeeee;border-radius:2px"></div>
<div class="abs" style="left:765.6px;top:586.20px;font-size:10.4px;line-height:12px;white-space:pre;color:#3a3a3a;letter-spacing:0.000px;">1</div>
<div class="abs" style="left:849.6px;top:555.00px;font-size:12.3px;line-height:14px;white-space:pre;color:#222;letter-spacing:-0.098px;">Measured values</div>
<div class="abs" style="left:850px;top:578.20px;font-size:10px;line-height:12px;white-space:pre;font-weight:bold;color:#222;letter-spacing:-0.295px;">PART</div>
<div class="abs" style="left:888.4px;top:578.20px;font-size:10px;line-height:12px;white-space:pre;font-weight:bold;color:#222;letter-spacing:-0.164px;">SUPPLIER</div>
<div class="abs" style="left:850px;top:606.70px;font-size:10px;line-height:12px;white-space:pre;font-weight:bold;color:#222;letter-spacing:-0.410px;">NEW</div>
<div class="abs" style="left:1016.5px;top:606.70px;font-size:10px;line-height:12px;white-space:pre;font-weight:bold;color:#222;letter-spacing:0.109px;">mm</div>
<div class="abs" style="left:888.6px;top:626.8px;width:127.6px;height:1px;background:#d8d8d8"></div>
</body></html>
